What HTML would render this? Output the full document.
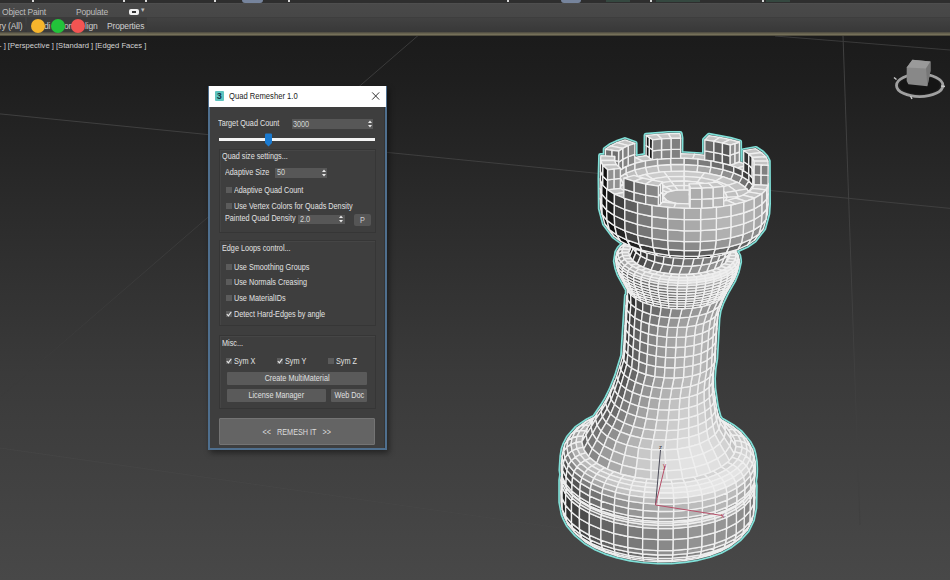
<!DOCTYPE html>
<html><head><meta charset="utf-8">
<style>
*{box-sizing:border-box;margin:0;padding:0}
html,body{width:950px;height:580px;overflow:hidden;background:#1b1b1b;font-family:"Liberation Sans",sans-serif}
#vp{position:absolute;left:0;top:36px;width:950px;height:544px;background:linear-gradient(#1b1b1b 0%,#1e1e1e 8%,#2b2b2b 32%,#3a3a3a 62%,#484848 100%)}
.a{position:absolute;white-space:nowrap}
#tb0{position:absolute;left:0;top:0;width:950px;height:3px;background:#2e2e2e}
#tb1{position:absolute;left:0;top:3px;width:950px;height:14px;background:linear-gradient(#505050 0px,#494949 1.5px,#474747 13px)}
#tb2{position:absolute;left:0;top:16.5px;width:950px;height:16px;background:linear-gradient(#3a3a3a 0px,#424242 1px,#3d3d3d 8px,#383838 15px)}
#tbl{position:absolute;left:0;top:31.5px;width:950px;height:4.5px;background:linear-gradient(#4a4840,#6c6752 45%,#7a755e 75%,#2a2822)}
.tt{color:#bdbdbd;font-size:8.5px;line-height:10px}
.dot{position:absolute;width:14px;height:14px;border-radius:50%}
#dlg{position:absolute;left:208px;top:86px;width:179px;height:364px;background:#3c3c3c;border:1px solid #5b7fa3}
#ttl{position:absolute;left:0;top:0;width:177px;height:21px;background:#fff}
.w{color:#e6e6e6;font-size:8px}
.grp{position:absolute;border:1px solid #333;background:#393939}
.spin{position:absolute;background:#575757;color:#d0d0d0;font-size:8px;padding-left:2px;line-height:10px}
.cb{position:absolute;width:6px;height:6px;background:#5a5a5a}
.btn{position:absolute;background:#5c5c5c;border:1px solid #666;color:#e0e0e0;font-size:8px;text-align:center}
</style></head><body>
<div id="tb0"></div>
<div id="tb1"></div>
<div class="a" style="left:32px;top:0;width:2px;height:2px;background:#d8d8d8"></div><div class="a" style="left:123px;top:0;width:2px;height:2px;background:#d8d8d8"></div><div class="a" style="left:145px;top:0;width:2px;height:2px;background:#d8d8d8"></div><div class="a" style="left:214px;top:0;width:2px;height:2px;background:#d8d8d8"></div><div class="a" style="left:288px;top:0;width:2px;height:2px;background:#d8d8d8"></div><div class="a" style="left:507px;top:0;width:2px;height:2px;background:#d8d8d8"></div><div class="a" style="left:650px;top:0;width:2px;height:2px;background:#d8d8d8"></div><div class="a" style="left:762px;top:0;width:2px;height:2px;background:#d8d8d8"></div><div class="a" style="left:242px;top:0;width:21px;height:3px;background:#76849c;border-radius:0 0 3px 3px"></div><div class="a" style="left:561px;top:0;width:20px;height:3px;background:#76849c;border-radius:0 0 3px 3px"></div><div class="a" style="left:606px;top:0;width:24px;height:2px;background:#354840"></div><div class="a" style="left:656px;top:0;width:44px;height:2px;background:#354840"></div><div class="a" style="left:766px;top:0;width:24px;height:2px;background:#354840"></div>
<div id="tb2"></div>
<div class="a" style="left:0;top:17px;width:25px;height:15px;background:#3a3a3a"></div>
<div class="a" style="left:27px;top:17px;width:120px;height:15px;background:#3b3b3b"></div>
<div id="tbl"></div>
<div class="a tt" style="left:2px;top:6.5px;font-size:8.5px;letter-spacing:-0.2px">Object Paint</div>
<div class="a tt" style="left:76px;top:6.5px;font-size:8.5px;letter-spacing:-0.2px">Populate</div>
<div class="a" style="left:129px;top:8.5px;width:10px;height:6px;background:#f0f0f0;border-radius:2px"></div>
<div class="a" style="left:132px;top:10.5px;width:4px;height:2px;background:#333"></div>
<div class="a tt" style="left:141px;top:5px;font-size:7px">&#9662;</div>
<div class="a tt" style="left:-1px;top:20.5px;font-size:8.5px;letter-spacing:-0.15px;color:#cfcfcf">ry (All)</div>
<div class="a tt" style="left:44px;top:20.5px;font-size:8.5px;letter-spacing:-0.15px;color:#cfcfcf">di</div>
<div class="a tt" style="left:64px;top:20.5px;font-size:8.5px;letter-spacing:-0.15px;color:#cfcfcf">on</div>
<div class="a tt" style="left:85px;top:20.5px;font-size:8.5px;letter-spacing:-0.15px;color:#cfcfcf">lign</div>
<div class="a tt" style="left:107px;top:20.5px;font-size:8.5px;letter-spacing:-0.15px;color:#cfcfcf">Properties</div>
<div class="dot" style="left:31px;top:19px;background:#f7b52c"></div>
<div class="dot" style="left:51px;top:19px;background:#22c33a"></div>
<div class="dot" style="left:71px;top:19px;background:#f35452"></div>
<div id="vp"></div>
<div class="a" style="left:-1px;top:40.5px;color:#d4d4d4;font-size:7.6px;line-height:9px;letter-spacing:0px">- ] [Perspective ] [Standard ] [Edged Faces ]</div>
<svg class="a" style="left:0;top:36px" width="950" height="544" viewBox="0 36 950 544">
<g fill="none" stroke-width="1">
<line x1="0" y1="113.9" x2="950" y2="208.4" stroke="#3f3f3f"/>
<line x1="0" y1="397" x2="421" y2="33" stroke="#3b3b3b"/>
<line x1="843" y1="36" x2="860" y2="525" stroke="#404040"/>
<line x1="775" y1="36" x2="950" y2="50" stroke="#3a3a3a"/>
<line x1="0" y1="448" x2="560" y2="528" stroke="#4a4a4a" stroke-opacity="0.5"/>
</g>
<ellipse cx="919.7" cy="85.4" rx="23.2" ry="11.2" fill="none" stroke="#a0a0a0" stroke-width="2.8"/>
<ellipse cx="919.7" cy="85.2" rx="20" ry="9" fill="#151515"/>
<path d="M906.7,67.6 L912.4,59.8 L930.5,61.4 L930.5,70.7 L927.4,86.2 L908.3,84.2 L906.7,81Z" fill="#888"/>
<path d="M906.7,67.6 L912.4,59.8 L930.5,61.4 L926,68.5Z" fill="#9a9a9a"/>
<path d="M926,68.5 L930.5,61.4 L930.5,70.7 L927.4,86.2Z" fill="#777"/>
<path d="M894,77.5 l2.5,2 M941,86 l4,0.5 M910.5,96 l1.5,3" stroke="#c8c8c8" stroke-width="1.5"/>
</svg>


<svg class="a" style="left:0;top:0" width="950" height="580" viewBox="0 0 950 580">
<path d="M587.6,420.3 576.6,427.7 568.1,437.3 564.6,444.1 562.9,449.0 561.7,456.1 560.8,470.1 561.5,474.4 560.6,480.1 560.6,502.1 562.9,514.3 564.5,518.3 568.0,525.2 575.8,534.4 585.8,542.7 594.9,548.0 605.5,552.6 617.4,556.4 630.3,559.3 643.8,561.2 657.7,562.1 671.5,562.0 685.0,560.9 697.9,558.8 709.8,555.7 720.4,551.8 729.5,547.0 739.5,539.4 747.4,530.6 752.6,520.0 755.0,507.9 755.4,485.9 754.7,481.5 755.6,475.9 755.8,468.9 755.5,461.8 754.3,454.7 753.0,449.7 749.5,442.8 741.2,432.7 733.5,426.6 721.1,419.3 719.3,416.6 716.6,406.6 714.0,388.5 713.6,378.5 714.3,368.5 715.9,358.4 718.1,318.4 719.3,310.8 722.0,302.9 726.7,293.1 733.9,280.6 737.4,271.9 739.7,261.9 739.6,259.8 738.9,255.7 735.9,250.7 747.5,245.5 754.6,240.6 763.9,228.5 768.0,213.6 768.6,203.5 768.4,161.1 766.1,156.6 761.9,152.3 755.8,148.3 743.4,150.5 743.3,163.0 739.8,161.8 739.7,141.7 730.2,139.1 708.9,135.2 704.4,139.8 704.4,154.8 681.0,153.3 681.1,138.1 680.3,133.4 668.3,133.3 645.9,135.2 645.7,155.2 635.2,157.0 635.2,143.2 624.9,139.5 616.8,142.3 610.2,145.5 605.1,149.1 605.0,155.5 600.5,155.4 599.9,178.5 600.2,208.6 604.3,223.8 613.6,236.4 620.7,241.7 623.9,243.3 618.9,248.2 616.6,252.1 615.2,261.2 616.6,268.3 618.7,274.3 627.1,289.7 627.2,295.7 626.8,295.2 626.3,295.4 622.5,355.5 616.4,375.4 610.9,389.3 606.7,397.9 602.2,405.4 594.4,416.8 587.6,420.3Z" fill="#80e0d8" stroke="#80e0d8" stroke-width="4.8" stroke-linejoin="round"/>
<path d="M587.6,420.3 576.6,427.7 568.1,437.3 564.6,444.1 562.9,449.0 561.7,456.1 560.8,470.1 561.5,474.4 560.6,480.1 560.6,502.1 562.9,514.3 564.5,518.3 568.0,525.2 575.8,534.4 585.8,542.7 594.9,548.0 605.5,552.6 617.4,556.4 630.3,559.3 643.8,561.2 657.7,562.1 671.5,562.0 685.0,560.9 697.9,558.8 709.8,555.7 720.4,551.8 729.5,547.0 739.5,539.4 747.4,530.6 752.6,520.0 755.0,507.9 755.4,485.9 754.7,481.5 755.6,475.9 755.8,468.9 755.5,461.8 754.3,454.7 753.0,449.7 749.5,442.8 741.2,432.7 733.5,426.6 721.1,419.3 719.3,416.6 716.6,406.6 714.0,388.5 713.6,378.5 714.3,368.5 715.9,358.4 718.1,318.4 719.3,310.8 722.0,302.9 726.7,293.1 733.9,280.6 737.4,271.9 739.7,261.9 739.6,259.8 738.9,255.7 735.9,250.7 747.5,245.5 754.6,240.6 763.9,228.5 768.0,213.6 768.6,203.5 768.4,161.1 766.1,156.6 761.9,152.3 755.8,148.3 743.4,150.5 743.3,163.0 739.8,161.8 739.7,141.7 730.2,139.1 708.9,135.2 704.4,139.8 704.4,154.8 681.0,153.3 681.1,138.1 680.3,133.4 668.3,133.3 645.9,135.2 645.7,155.2 635.2,157.0 635.2,143.2 624.9,139.5 616.8,142.3 610.2,145.5 605.1,149.1 605.0,155.5 600.5,155.4 599.9,178.5 600.2,208.6 604.3,223.8 613.6,236.4 620.7,241.7 623.9,243.3 618.9,248.2 616.6,252.1 615.2,261.2 616.6,268.3 618.7,274.3 627.1,289.7 627.2,295.7 626.8,295.2 626.3,295.4 622.5,355.5 616.4,375.4 610.9,389.3 606.7,397.9 602.2,405.4 594.4,416.8 587.6,420.3Z" fill="#3a4646" stroke="#3a4646" stroke-width="1.4" stroke-linejoin="round"/>
<g stroke="#efefef" stroke-width="1.35" stroke-linejoin="round">
<path d="M646.0,406.3 659.0,406.2 659.0,405.9 645.2,406.0Z" fill="#989898"/>
<path d="M659.0,406.2 671.9,407.1 672.7,406.8 659.0,405.9Z" fill="#9c9c9c"/>
<path d="M633.3,407.4 646.0,406.3 645.2,406.0 631.8,407.1Z" fill="#969696"/>
<path d="M671.9,407.1 684.6,408.9 686.2,408.7 672.7,406.8Z" fill="#a0a0a0"/>
<path d="M646.9,408.1 658.9,408.0 659.0,406.2 646.0,406.3Z" fill="#b3b3b3"/>
<path d="M658.9,408.0 671.0,408.9 671.9,407.1 659.0,406.2Z" fill="#b4b4b4"/>
<path d="M621.3,409.3 633.3,407.4 631.8,407.1 619.0,409.2Z" fill="#949494"/>
<path d="M684.6,408.9 696.6,411.6 698.9,411.6 686.2,408.7Z" fill="#a5a5a5"/>
<path d="M635.1,409.1 646.9,408.1 646.0,406.3 633.3,407.4Z" fill="#b2b2b2"/>
<path d="M671.0,408.9 682.7,410.5 684.6,408.9 671.9,407.1Z" fill="#b6b6b6"/>
<path d="M624.0,410.9 635.1,409.1 633.3,407.4 621.3,409.3Z" fill="#b1b1b1"/>
<path d="M682.7,410.5 693.9,413.0 696.6,411.6 684.6,408.9Z" fill="#b8b8b8"/>
<path d="M696.6,411.6 707.7,415.1 710.7,415.3 698.9,411.6Z" fill="#aaaaaa"/>
<path d="M610.2,412.2 621.3,409.3 619.0,409.2 607.2,412.2Z" fill="#949494"/>
<path d="M693.9,413.0 704.2,416.3 707.7,415.1 696.6,411.6Z" fill="#bbbbbb"/>
<path d="M613.7,413.6 624.0,410.9 621.3,409.3 610.2,412.2Z" fill="#b1b1b1"/>
<path d="M707.7,415.1 717.6,419.4 721.2,419.8 710.7,415.3Z" fill="#b0b0b0"/>
<path d="M600.3,415.8 610.2,412.2 607.2,412.2 596.7,416.1Z" fill="#949494"/>
<path d="M704.2,416.3 713.4,420.2 717.6,419.4 707.7,415.1Z" fill="#bdbdbd"/>
<path d="M604.5,416.9 613.7,413.6 610.2,412.2 600.3,415.8Z" fill="#b1b1b1"/>
<path d="M721.2,419.8 730.2,425.0 733.3,427.0 723.9,421.5Z" fill="#a4a4a4"/>
<path d="M587.8,420.7 596.7,416.1 593.8,417.6 584.5,422.5Z" fill="#6f6f6f"/>
<path d="M717.6,419.4 726.1,424.2 730.2,425.0 721.2,419.8Z" fill="#b6b6b6"/>
<path d="M591.8,420.2 600.3,415.8 596.7,416.1 587.8,420.7Z" fill="#959595"/>
<path d="M713.4,420.2 721.2,424.7 726.1,424.2 717.6,419.4Z" fill="#c0c0c0"/>
<path d="M596.6,421.0 604.5,416.9 600.3,415.8 591.8,420.2Z" fill="#b1b1b1"/>
<path d="M730.2,425.0 737.4,430.7 740.9,432.9 733.3,427.0Z" fill="#adadad"/>
<path d="M580.6,426.0 587.8,420.7 584.5,422.5 576.9,428.0Z" fill="#727272"/>
<path d="M726.1,424.2 732.9,429.6 737.4,430.7 730.2,425.0Z" fill="#bcbcbc"/>
<path d="M585.0,425.2 591.8,420.2 587.8,420.7 580.6,426.0Z" fill="#979797"/>
<path d="M721.2,424.7 727.5,429.7 732.9,429.6 726.1,424.2Z" fill="#c3c3c3"/>
<path d="M590.3,425.6 596.6,421.0 591.8,420.2 585.0,425.2Z" fill="#b2b2b2"/>
<path d="M737.4,430.7 742.7,436.8 746.4,439.3 740.9,432.9Z" fill="#b7b7b7"/>
<path d="M575.3,431.8 580.6,426.0 576.9,428.0 571.4,434.1Z" fill="#777777"/>
<path d="M748.9,466.9 752.4,473.8 753.3,475.8 749.8,468.8Z" fill="#929292"/>
<path d="M563.7,468.2 567.2,461.4 566.2,463.2 562.7,470.1Z" fill="#393939"/>
<path d="M732.9,429.6 737.9,435.4 742.7,436.8 737.4,430.7Z" fill="#c2c2c2"/>
<path d="M580.0,430.7 585.0,425.2 580.6,426.0 575.3,431.8Z" fill="#9a9a9a"/>
<path d="M727.5,429.7 732.2,435.1 737.9,435.4 732.9,429.6Z" fill="#c6c6c6"/>
<path d="M585.7,430.7 590.3,425.6 585.0,425.2 580.0,430.7Z" fill="#b4b4b4"/>
<path d="M746.4,439.3 749.7,446.0 752.6,449.9 749.1,443.0Z" fill="#b0b0b0"/>
<path d="M568.0,440.5 571.4,434.1 568.4,437.6 564.9,444.2Z" fill="#575757"/>
<path d="M742.7,436.8 745.9,443.2 749.7,446.0 746.4,439.3Z" fill="#c1c1c1"/>
<path d="M572.1,438.0 575.3,431.8 571.4,434.1 568.0,440.5Z" fill="#7d7d7d"/>
<path d="M587.6,427.8 592.3,421.2 588.6,427.3 583.6,434.3Z" fill="#484848"/>
<path d="M725.0,425.2 729.7,432.1 734.2,438.8 729.3,431.5Z" fill="#a3a3a3"/>
<path d="M737.9,435.4 740.9,441.4 745.9,443.2 742.7,436.8Z" fill="#c8c8c8"/>
<path d="M577.0,436.5 580.0,430.7 575.3,431.8 572.1,438.0Z" fill="#9e9e9e"/>
<path d="M753.3,475.8 754.5,482.9 755.0,485.9 753.8,478.7Z" fill="#858585"/>
<path d="M561.5,477.1 562.7,470.1 562.2,473.0 561.0,480.1Z" fill="#212121"/>
<path d="M752.4,473.8 753.6,480.9 754.5,482.9 753.3,475.8Z" fill="#9d9d9d"/>
<path d="M562.6,475.1 563.7,468.2 562.7,470.1 561.5,477.1Z" fill="#424242"/>
<path d="M732.2,435.1 735.0,440.7 740.9,441.4 737.9,435.4Z" fill="#c8c8c8"/>
<path d="M582.9,436.1 585.7,430.7 580.0,430.7 577.0,436.5Z" fill="#b5b5b5"/>
<path d="M592.6,420.5 596.9,414.4 592.3,421.2 587.6,427.8Z" fill="#4c4c4c"/>
<path d="M719.7,418.1 724.1,424.5 729.7,432.1 725.0,425.2Z" fill="#a6a6a6"/>
<path d="M752.6,449.9 753.8,456.9 755.1,461.9 753.9,454.8Z" fill="#a0a0a0"/>
<path d="M563.8,451.1 564.9,444.2 563.3,449.1 562.1,456.1Z" fill="#343434"/>
<path d="M754.9,496.9 753.7,504.0 753.4,515.0 754.6,507.9Z" fill="#747474"/>
<path d="M562.1,498.3 560.9,491.1 561.0,502.1 562.2,509.3Z" fill="#181818"/>
<path d="M749.7,446.0 750.9,452.8 753.8,456.9 752.6,449.9Z" fill="#bcbcbc"/>
<path d="M566.9,447.2 568.0,440.5 564.9,444.2 563.8,451.1Z" fill="#616161"/>
<path d="M745.9,443.2 747.0,449.6 750.9,452.8 749.7,446.0Z" fill="#cacaca"/>
<path d="M571.0,444.4 572.1,438.0 568.0,440.5 566.9,447.2Z" fill="#848484"/>
<path d="M755.0,485.9 753.8,493.0 753.7,504.0 754.9,496.9Z" fill="#767676"/>
<path d="M562.2,487.3 561.0,480.1 560.9,491.1 562.1,498.3Z" fill="#1a1a1a"/>
<path d="M740.9,441.4 742.0,447.5 747.0,449.6 745.9,443.2Z" fill="#cecece"/>
<path d="M576.0,442.5 577.0,436.5 572.1,438.0 571.0,444.4Z" fill="#a3a3a3"/>
<path d="M729.7,432.1 731.2,439.2 735.9,446.3 734.2,438.8Z" fill="#b4b4b4"/>
<path d="M586.0,434.8 587.6,427.8 583.6,434.3 581.9,441.7Z" fill="#545454"/>
<path d="M735.0,440.7 735.9,446.3 742.0,447.5 740.9,441.4Z" fill="#cbcbcb"/>
<path d="M581.9,441.7 582.9,436.1 577.0,436.5 576.0,442.5Z" fill="#b7b7b7"/>
<path d="M754.5,482.9 753.3,489.9 753.8,493.0 755.0,485.9Z" fill="#919191"/>
<path d="M562.7,484.2 561.5,477.1 561.0,480.1 562.2,487.3Z" fill="#2d2d2d"/>
<path d="M753.6,480.9 752.4,487.8 753.3,489.9 754.5,482.9Z" fill="#a8a8a8"/>
<path d="M563.7,482.2 562.6,475.1 561.5,477.1 562.7,484.2Z" fill="#4d4d4d"/>
<path d="M724.1,424.5 725.5,431.0 731.2,439.2 729.7,432.1Z" fill="#b6b6b6"/>
<path d="M591.1,427.0 592.6,420.5 587.6,427.8 586.0,434.8Z" fill="#585858"/>
<path d="M752.2,519.9 748.7,526.6 747.1,530.4 750.6,523.7Z" fill="#6e6e6e"/>
<path d="M566.8,521.2 563.3,514.2 564.9,518.1 568.3,525.0Z" fill="#0f0f0f"/>
<path d="M755.4,468.9 754.2,476.0 754.0,483.0 755.2,475.9Z" fill="#909090"/>
<path d="M562.6,470.2 561.4,463.1 561.2,470.1 562.4,477.2Z" fill="#202020"/>
<path d="M718.9,416.8 720.3,422.9 725.5,431.0 724.1,424.5Z" fill="#b3b3b3"/>
<path d="M595.7,419.1 597.1,413.2 592.6,420.5 591.1,427.0Z" fill="#535353"/>
<path d="M753.4,515.0 749.9,521.8 748.7,526.6 752.2,519.9Z" fill="#808080"/>
<path d="M565.7,516.3 562.2,509.3 563.3,514.2 566.8,521.2Z" fill="#161616"/>
<path d="M755.1,461.9 753.9,468.9 754.2,476.0 755.4,468.9Z" fill="#979797"/>
<path d="M563.3,463.2 562.1,456.1 561.4,463.1 562.6,470.2Z" fill="#282828"/>
<path d="M716.5,409.1 717.8,414.7 720.3,422.9 718.9,416.8Z" fill="#adadad"/>
<path d="M601.2,411.3 602.5,405.7 597.1,413.2 595.7,419.1Z" fill="#484848"/>
<path d="M753.8,456.9 752.6,463.8 753.9,468.9 755.1,461.9Z" fill="#adadad"/>
<path d="M564.9,458.1 563.8,451.1 562.1,456.1 563.3,463.2Z" fill="#414141"/>
<path d="M753.7,504.0 750.1,510.9 749.9,521.8 753.4,515.0Z" fill="#7e7e7e"/>
<path d="M565.6,505.3 562.1,498.3 562.2,509.3 565.7,516.3Z" fill="#242424"/>
<path d="M750.9,452.8 749.7,459.5 752.6,463.8 753.8,456.9Z" fill="#c7c7c7"/>
<path d="M568.0,454.0 566.9,447.2 563.8,451.1 564.9,458.1Z" fill="#6b6b6b"/>
<path d="M747.0,449.6 745.9,456.0 749.7,459.5 750.9,452.8Z" fill="#d2d2d2"/>
<path d="M572.1,450.8 571.0,444.4 566.9,447.2 568.0,454.0Z" fill="#8c8c8c"/>
<path d="M742.0,447.5 740.9,453.5 745.9,456.0 747.0,449.6Z" fill="#d3d3d3"/>
<path d="M577.0,448.6 576.0,442.5 571.0,444.4 572.1,450.8Z" fill="#a8a8a8"/>
<path d="M735.9,446.3 735.0,451.9 740.9,453.5 742.0,447.5Z" fill="#cdcdcd"/>
<path d="M582.9,447.3 581.9,441.7 576.0,442.5 577.0,448.6Z" fill="#bababa"/>
<path d="M715.0,401.3 716.2,406.7 717.8,414.7 716.5,409.1Z" fill="#a5a5a5"/>
<path d="M605.8,403.3 607.1,398.1 602.5,405.7 601.2,411.3Z" fill="#3c3c3c"/>
<path d="M753.8,493.0 750.2,499.8 750.1,510.9 753.7,504.0Z" fill="#7f7f7f"/>
<path d="M565.7,494.3 562.2,487.3 562.1,498.3 565.6,505.3Z" fill="#262626"/>
<path d="M731.2,439.2 729.7,446.2 734.2,453.7 735.9,446.3Z" fill="#c3c3c3"/>
<path d="M587.6,441.9 586.0,434.8 581.9,441.7 583.6,449.2Z" fill="#636363"/>
<path d="M713.8,392.5 714.9,397.6 716.2,406.7 715.0,401.3Z" fill="#9f9f9f"/>
<path d="M610.1,394.4 611.2,389.4 607.1,398.1 605.8,403.3Z" fill="#343434"/>
<path d="M753.3,489.9 749.8,496.8 750.2,499.8 753.8,493.0Z" fill="#9b9b9b"/>
<path d="M566.2,491.2 562.7,484.2 562.2,487.3 565.7,494.3Z" fill="#3a3a3a"/>
<path d="M752.4,487.8 748.9,494.6 749.8,496.8 753.3,489.9Z" fill="#b2b2b2"/>
<path d="M567.2,489.1 563.7,482.2 562.7,484.2 566.2,491.2Z" fill="#595959"/>
<path d="M725.5,431.0 724.1,437.5 729.7,446.2 731.2,439.2Z" fill="#c5c5c5"/>
<path d="M592.6,433.5 591.1,427.0 586.0,434.8 587.6,441.9Z" fill="#676767"/>
<path d="M671.7,233.6 678.9,233.6 678.9,230.7 670.7,230.7Z" fill="#c4c4c4"/>
<path d="M678.9,233.6 686.0,234.0 687.0,231.2 678.9,230.7Z" fill="#c4c4c4"/>
<path d="M754.0,483.0 750.5,489.8 749.9,492.7 753.4,485.9Z" fill="#888888"/>
<path d="M566.0,484.3 562.4,477.2 562.8,480.2 566.3,487.2Z" fill="#1d1d1d"/>
<path d="M712.5,383.7 713.6,388.5 714.9,397.6 713.8,392.5Z" fill="#9b9b9b"/>
<path d="M613.6,385.5 614.7,380.8 611.2,389.4 610.1,394.4Z" fill="#2f2f2f"/>
<path d="M748.7,526.6 742.9,533.0 741.5,536.6 747.1,530.4Z" fill="#777777"/>
<path d="M572.6,527.9 566.8,521.2 568.3,525.0 574.0,531.6Z" fill="#161616"/>
<path d="M686.0,234.0 692.9,234.8 694.9,232.1 687.0,231.2Z" fill="#c4c4c4"/>
<path d="M664.8,234.0 671.7,233.6 670.7,230.7 662.8,231.2Z" fill="#c4c4c4"/>
<path d="M720.3,422.9 718.9,428.8 724.1,437.5 725.5,431.0Z" fill="#c3c3c3"/>
<path d="M597.1,425.2 595.7,419.1 591.1,427.0 592.6,433.5Z" fill="#626262"/>
<path d="M680.6,158.2 692.8,158.7 694.5,154.2 679.9,153.6Z" fill="#c4c4c4"/>
<path d="M754.2,476.0 750.7,482.8 750.5,489.8 754.0,483.0Z" fill="#9b9b9b"/>
<path d="M566.2,477.3 562.6,470.2 562.4,477.2 566.0,484.3Z" fill="#2e2e2e"/>
<path d="M749.9,521.8 744.0,528.3 742.9,533.0 748.7,526.6Z" fill="#8a8a8a"/>
<path d="M571.5,523.1 565.7,516.3 566.8,521.2 572.6,527.9Z" fill="#252525"/>
<path d="M692.9,234.8 699.6,236.1 702.5,233.5 694.9,232.1Z" fill="#c4c4c4"/>
<path d="M658.1,234.8 664.8,234.0 662.8,231.2 655.2,232.1Z" fill="#c4c4c4"/>
<path d="M692.8,158.7 704.7,159.9 708.8,155.6 694.5,154.2Z" fill="#c4c4c4"/>
<path d="M717.8,414.7 716.5,420.3 718.9,428.8 720.3,422.9Z" fill="#bdbdbd"/>
<path d="M602.5,416.9 601.2,411.3 595.7,419.1 597.1,425.2Z" fill="#585858"/>
<path d="M753.9,468.9 750.4,475.7 750.7,482.8 754.2,476.0Z" fill="#a3a3a3"/>
<path d="M566.8,470.2 563.3,463.2 562.6,470.2 566.2,477.3Z" fill="#363636"/>
<path d="M716.2,406.7 715.0,411.9 716.5,420.3 717.8,414.7Z" fill="#b5b5b5"/>
<path d="M607.1,408.7 605.8,403.3 601.2,411.3 602.5,416.9Z" fill="#4c4c4c"/>
<path d="M750.1,510.9 744.3,517.3 744.0,528.3 749.9,521.8Z" fill="#868686"/>
<path d="M571.5,512.1 565.6,505.3 565.7,516.3 571.5,523.1Z" fill="#313131"/>
<path d="M752.6,463.8 749.1,470.4 750.4,475.7 753.9,468.9Z" fill="#b8b8b8"/>
<path d="M568.4,465.0 564.9,458.1 563.3,463.2 566.8,470.2Z" fill="#4f4f4f"/>
<path d="M699.6,236.1 705.9,237.6 709.7,235.3 702.5,233.5Z" fill="#c4c4c4"/>
<path d="M651.8,236.0 658.1,234.8 655.2,232.1 648.0,233.5Z" fill="#c4c4c4"/>
<path d="M735.0,451.9 732.2,457.3 737.9,459.3 740.9,453.5Z" fill="#cfcfcf"/>
<path d="M585.7,452.9 582.9,447.3 577.0,448.6 580.0,454.6Z" fill="#bcbcbc"/>
<path d="M749.7,459.5 746.4,465.9 749.1,470.4 752.6,463.8Z" fill="#d0d0d0"/>
<path d="M571.4,460.7 568.0,454.0 564.9,458.1 568.4,465.0Z" fill="#777777"/>
<path d="M740.9,453.5 737.9,459.3 742.7,462.2 745.9,456.0Z" fill="#d8d8d8"/>
<path d="M580.0,454.6 577.0,448.6 572.1,450.8 575.3,457.2Z" fill="#adadad"/>
<path d="M745.9,456.0 742.7,462.2 746.4,465.9 749.7,459.5Z" fill="#d9d9d9"/>
<path d="M575.3,457.2 572.1,450.8 568.0,454.0 571.4,460.7Z" fill="#959595"/>
<path d="M684.2,164.5 697.9,165.3 697.1,172.0 684.2,171.2Z" fill="#b1b1b1"/>
<path d="M670.6,164.5 684.2,164.5 684.2,171.2 671.3,171.3Z" fill="#b9b9b9"/>
<path d="M670.6,158.3 684.3,158.2 684.2,164.5 670.6,164.5Z" fill="#919191"/>
<path d="M684.3,158.2 697.9,159.1 697.9,165.3 684.2,164.5Z" fill="#878787"/>
<path d="M649.4,147.7 646.2,145.5 646.1,155.5 649.3,157.7Z" fill="#131313"/>
<path d="M714.9,397.6 713.8,402.6 715.0,411.9 716.2,406.7Z" fill="#afafaf"/>
<path d="M611.2,399.5 610.1,394.4 605.8,403.3 607.1,408.7Z" fill="#444444"/>
<path d="M671.0,138.3 680.7,138.2 680.0,133.6 668.3,133.7Z" fill="#c4c4c4"/>
<path d="M750.2,499.8 744.4,506.3 744.3,517.3 750.1,510.9Z" fill="#878787"/>
<path d="M571.5,501.1 565.7,494.3 565.6,505.3 571.5,512.1Z" fill="#323232"/>
<path d="M697.9,165.3 711.0,167.1 709.5,173.7 697.1,172.0Z" fill="#a7a7a7"/>
<path d="M657.5,165.5 670.6,164.5 671.3,171.3 659.0,172.2Z" fill="#bebebe"/>
<path d="M697.9,159.1 711.1,160.8 711.0,167.1 697.9,165.3Z" fill="#7b7b7b"/>
<path d="M657.5,159.2 670.6,158.3 670.6,164.5 657.5,165.5Z" fill="#979797"/>
<path d="M671.0,149.3 680.6,149.2 680.6,158.2 670.9,158.3Z" fill="#808080"/>
<path d="M705.9,237.6 711.6,239.6 716.2,237.5 709.7,235.3Z" fill="#c4c4c4"/>
<path d="M646.1,237.6 651.8,236.0 648.0,233.5 641.5,235.3Z" fill="#c4c4c4"/>
<path d="M661.6,138.8 671.0,138.3 668.3,133.7 657.0,134.4Z" fill="#c4c4c4"/>
<path d="M713.6,388.5 712.5,393.2 713.8,402.6 714.9,397.6Z" fill="#acacac"/>
<path d="M614.7,390.3 613.6,385.5 610.1,394.4 611.2,399.5Z" fill="#404040"/>
<path d="M649.4,137.7 646.2,135.5 646.2,145.5 649.4,147.7Z" fill="#131313"/>
<path d="M741.5,536.6 733.8,542.3 731.8,544.6 739.3,539.1Z" fill="#555555"/>
<path d="M581.7,537.8 574.0,531.6 576.1,534.2 583.6,540.2Z" fill="#0f0f0f"/>
<path d="M749.8,496.8 744.0,503.2 744.4,506.3 750.2,499.8Z" fill="#a4a4a4"/>
<path d="M572.0,498.0 566.2,491.2 565.7,494.3 571.5,501.1Z" fill="#484848"/>
<path d="M592.3,448.8 587.6,441.9 583.6,449.2 588.6,456.5Z" fill="#747474"/>
<path d="M729.7,446.2 725.0,452.8 729.3,460.7 734.2,453.7Z" fill="#d0d0d0"/>
<path d="M661.5,149.8 671.0,149.3 670.9,158.3 661.5,158.8Z" fill="#858585"/>
<path d="M748.9,494.6 743.1,500.9 744.0,503.2 749.8,496.8Z" fill="#bababa"/>
<path d="M573.0,495.8 567.2,489.1 566.2,491.2 572.0,498.0Z" fill="#656565"/>
<path d="M643.1,161.4 652.5,159.8 646.1,155.5 634.9,157.4Z" fill="#c4c4c4"/>
<path d="M724.1,437.5 719.7,443.6 725.0,452.8 729.7,446.2Z" fill="#d2d2d2"/>
<path d="M596.9,439.9 592.6,433.5 587.6,441.9 592.3,448.8Z" fill="#787878"/>
<path d="M749.9,492.7 744.1,499.1 743.1,500.9 748.9,494.6Z" fill="#616161"/>
<path d="M572.1,494.0 566.3,487.2 567.2,489.1 573.0,495.8Z" fill="#0d0d0d"/>
<path d="M704.8,139.9 713.9,141.3 719.9,137.3 708.9,135.6Z" fill="#c4c4c4"/>
<path d="M671.0,138.3 680.7,138.2 680.6,149.2 671.0,149.3Z" fill="#808080"/>
<path d="M742.9,533.0 735.1,538.8 733.8,542.3 741.5,536.6Z" fill="#7e7e7e"/>
<path d="M580.4,534.2 572.6,527.9 574.0,531.6 581.7,537.8Z" fill="#252525"/>
<path d="M652.6,139.8 661.6,138.8 657.0,134.4 646.2,135.5Z" fill="#c4c4c4"/>
<path d="M713.2,378.4 712.1,383.0 712.5,393.2 713.6,388.5Z" fill="#a4a4a4"/>
<path d="M617.9,380.2 616.8,375.6 613.6,385.5 614.7,390.3Z" fill="#363636"/>
<path d="M718.9,428.8 714.9,434.5 719.7,443.6 724.1,437.5Z" fill="#cfcfcf"/>
<path d="M601.1,431.1 597.1,425.2 592.6,433.5 596.9,439.9Z" fill="#737373"/>
<path d="M652.5,149.8 649.4,147.7 649.3,157.7 652.5,159.8Z" fill="#131313"/>
<path d="M750.5,489.8 744.6,496.3 744.1,499.1 749.9,492.7Z" fill="#929292"/>
<path d="M571.8,491.1 566.0,484.3 566.3,487.2 572.1,494.0Z" fill="#2c2c2c"/>
<path d="M704.8,150.9 713.9,152.3 713.9,161.3 704.7,159.9Z" fill="#696969"/>
<path d="M663.8,171.7 684.2,171.2 684.2,176.3 667.5,176.7Z" fill="#cccccc"/>
<path d="M684.2,171.2 704.6,172.9 700.9,177.7 684.2,176.3Z" fill="#cacaca"/>
<path d="M711.0,167.1 723.1,169.6 720.9,176.2 709.5,173.7Z" fill="#9b9b9b"/>
<path d="M645.4,167.3 657.5,165.5 659.0,172.2 647.5,174.0Z" fill="#c1c1c1"/>
<path d="M711.6,239.6 716.6,241.8 721.9,240.0 716.2,237.5Z" fill="#c4c4c4"/>
<path d="M641.1,239.5 646.1,237.6 641.5,235.3 635.8,237.5Z" fill="#c4c4c4"/>
<path d="M652.5,150.8 661.5,149.8 661.5,158.8 652.5,159.8Z" fill="#878787"/>
<path d="M711.1,160.8 723.2,163.3 723.1,169.6 711.0,167.1Z" fill="#6d6d6d"/>
<path d="M645.4,160.9 657.5,159.2 657.5,165.5 645.4,167.3Z" fill="#9a9a9a"/>
<path d="M661.6,138.8 671.0,138.3 671.0,149.3 661.5,149.8Z" fill="#858585"/>
<path d="M716.5,420.3 712.8,425.6 714.9,434.5 718.9,428.8Z" fill="#cacaca"/>
<path d="M606.3,422.4 602.5,416.9 597.1,425.2 601.1,431.1Z" fill="#696969"/>
<path d="M750.7,482.8 744.8,489.2 744.6,496.3 750.5,489.8Z" fill="#a5a5a5"/>
<path d="M572.0,484.0 566.2,477.3 566.0,484.3 571.8,491.1Z" fill="#3d3d3d"/>
<path d="M744.0,528.3 736.1,534.1 735.1,538.8 742.9,533.0Z" fill="#919191"/>
<path d="M579.5,529.4 571.5,523.1 572.6,527.9 580.4,534.2Z" fill="#343434"/>
<path d="M715.0,411.9 711.5,416.9 712.8,425.6 716.5,420.3Z" fill="#c3c3c3"/>
<path d="M610.6,413.9 607.1,408.7 602.5,416.9 606.3,422.4Z" fill="#5f5f5f"/>
<path d="M713.9,368.4 712.9,372.8 712.1,383.0 713.2,378.4Z" fill="#9e9e9e"/>
<path d="M620.9,370.1 619.9,365.6 616.8,375.6 617.9,380.2Z" fill="#2f2f2f"/>
<path d="M652.6,139.8 649.4,137.7 649.4,147.7 652.5,149.8Z" fill="#131313"/>
<path d="M713.9,141.3 722.5,143.1 730.1,139.5 719.9,137.3Z" fill="#c4c4c4"/>
<path d="M704.8,139.9 713.9,141.3 713.9,152.3 704.8,150.9Z" fill="#696969"/>
<path d="M732.2,457.3 727.5,462.4 732.9,464.8 737.9,459.3Z" fill="#d1d1d1"/>
<path d="M590.3,458.3 585.7,452.9 580.0,454.6 585.0,460.4Z" fill="#bfbfbf"/>
<path d="M750.4,475.7 744.6,482.1 744.8,489.2 750.7,482.8Z" fill="#adadad"/>
<path d="M572.6,476.9 566.8,470.2 566.2,477.3 572.0,484.0Z" fill="#454545"/>
<path d="M713.9,152.3 722.4,154.1 722.4,163.1 713.9,161.3Z" fill="#606060"/>
<path d="M652.6,139.8 661.6,138.8 661.5,149.8 652.5,150.8Z" fill="#878787"/>
<path d="M734.8,153.6 739.4,152.0 739.4,162.0 734.8,163.6Z" fill="#8f8f8f"/>
<path d="M744.3,517.3 736.4,523.2 736.1,534.1 744.0,528.3Z" fill="#8c8c8c"/>
<path d="M579.4,518.5 571.5,512.1 571.5,523.1 579.5,529.4Z" fill="#3e3e3e"/>
<path d="M713.8,402.6 710.4,407.3 711.5,416.9 715.0,411.9Z" fill="#bebebe"/>
<path d="M614.6,404.4 611.2,399.5 607.1,408.7 610.6,413.9Z" fill="#575757"/>
<path d="M634.8,163.4 643.1,161.4 634.9,157.4 624.9,159.9Z" fill="#c4c4c4"/>
<path d="M737.9,459.3 732.9,464.8 737.4,468.0 742.7,462.2Z" fill="#dbdbdb"/>
<path d="M585.0,460.4 580.0,454.6 575.3,457.2 580.6,463.3Z" fill="#b3b3b3"/>
<path d="M749.1,470.4 743.4,476.7 744.6,482.1 750.4,475.7Z" fill="#c1c1c1"/>
<path d="M574.1,471.6 568.4,465.0 566.8,470.2 572.6,476.9Z" fill="#5e5e5e"/>
<path d="M731.8,544.6 722.5,549.5 720.2,551.4 729.3,546.7Z" fill="#464646"/>
<path d="M592.9,545.6 583.6,540.2 586.1,542.4 595.1,547.6Z" fill="#0f0f0f"/>
<path d="M704.6,172.9 723.0,176.7 716.0,180.8 700.9,177.7Z" fill="#c8c8c8"/>
<path d="M645.4,174.4 663.8,171.7 667.5,176.7 652.5,178.9Z" fill="#cccccc"/>
<path d="M742.7,462.2 737.4,468.0 740.9,472.0 746.4,465.9Z" fill="#dfdfdf"/>
<path d="M580.6,463.3 575.3,457.2 571.4,460.7 576.9,467.1Z" fill="#9f9f9f"/>
<path d="M746.4,465.9 740.9,472.0 743.4,476.7 749.1,470.4Z" fill="#d8d8d8"/>
<path d="M576.9,467.1 571.4,460.7 568.4,465.0 574.1,471.6Z" fill="#848484"/>
<path d="M715.5,358.4 714.5,362.7 712.9,372.8 713.9,368.4Z" fill="#999999"/>
<path d="M623.9,360.0 622.9,355.6 619.9,365.6 620.9,370.1Z" fill="#2a2a2a"/>
<path d="M716.6,241.8 720.9,244.2 726.8,242.9 721.9,240.0Z" fill="#c4c4c4"/>
<path d="M636.8,241.7 641.1,239.5 635.8,237.5 630.9,240.0Z" fill="#c4c4c4"/>
<path d="M712.5,393.2 709.3,397.7 710.4,407.3 713.8,402.6Z" fill="#bababa"/>
<path d="M617.9,395.0 614.7,390.3 611.2,399.5 614.6,404.4Z" fill="#535353"/>
<path d="M713.9,141.3 722.5,143.1 722.4,154.1 713.9,152.3Z" fill="#606060"/>
<path d="M725.0,241.7 729.6,245.0 731.5,246.4 726.5,243.0Z" fill="#b1b1b1"/>
<path d="M628.1,241.9 632.7,238.9 629.5,240.1 624.5,243.2Z" fill="#7a7a7a"/>
<path d="M723.1,169.6 733.7,172.8 730.9,179.3 720.9,176.2Z" fill="#8e8e8e"/>
<path d="M634.7,169.9 645.4,167.3 647.5,174.0 637.5,176.5Z" fill="#c1c1c1"/>
<path d="M734.9,143.6 739.5,142.0 739.4,152.0 734.8,153.6Z" fill="#8f8f8f"/>
<path d="M723.2,163.3 733.8,166.4 733.7,172.8 723.1,169.6Z" fill="#5e5e5e"/>
<path d="M634.8,163.4 645.4,160.9 645.4,167.3 634.7,169.9Z" fill="#9a9a9a"/>
<path d="M744.4,506.3 736.4,512.1 736.4,523.2 744.3,517.3Z" fill="#8e8e8e"/>
<path d="M579.5,507.4 571.5,501.1 571.5,512.1 579.4,518.5Z" fill="#3f3f3f"/>
<path d="M733.8,542.3 724.2,547.3 722.5,549.5 731.8,544.6Z" fill="#595959"/>
<path d="M591.2,543.3 581.7,537.8 583.6,540.2 592.9,545.6Z" fill="#151515"/>
<path d="M722.5,143.1 730.3,145.2 739.5,142.0 730.1,139.5Z" fill="#c4c4c4"/>
<path d="M722.4,154.1 730.2,156.2 730.2,165.2 722.4,163.1Z" fill="#565656"/>
<path d="M730.2,165.2 737.5,167.8 748.1,165.2 739.4,162.0Z" fill="#c4c4c4"/>
<path d="M715.8,348.4 714.8,352.7 714.5,362.7 715.5,358.4Z" fill="#959595"/>
<path d="M624.8,350.0 623.8,345.6 622.9,355.6 623.9,360.0Z" fill="#252525"/>
<path d="M712.1,383.0 709.0,387.3 709.3,397.7 712.5,393.2Z" fill="#b3b3b3"/>
<path d="M621.0,384.7 617.9,380.2 614.7,390.3 617.9,395.0Z" fill="#494949"/>
<path d="M730.2,155.2 734.8,153.6 734.8,163.6 730.2,165.2Z" fill="#8f8f8f"/>
<path d="M744.0,503.2 736.1,509.0 736.4,512.1 744.4,506.3Z" fill="#ababab"/>
<path d="M579.9,504.3 572.0,498.0 571.5,501.1 579.5,507.4Z" fill="#565656"/>
<path d="M667.5,176.7 684.2,176.3 684.2,181.0 670.9,181.4Z" fill="#cccccc"/>
<path d="M684.2,176.3 700.9,177.7 697.5,182.2 684.2,181.0Z" fill="#cacaca"/>
<path d="M743.1,500.9 735.3,506.7 736.1,509.0 744.0,503.2Z" fill="#c0c0c0"/>
<path d="M580.8,502.0 573.0,495.8 572.0,498.0 579.9,504.3Z" fill="#727272"/>
<path d="M735.1,538.8 725.3,543.9 724.2,547.3 733.8,542.3Z" fill="#838383"/>
<path d="M590.2,539.8 580.4,534.2 581.7,537.8 591.2,543.3Z" fill="#343434"/>
<path d="M725.0,452.8 717.4,458.7 721.2,467.0 729.3,460.7Z" fill="#dadada"/>
<path d="M599.9,455.1 592.3,448.8 588.6,456.5 596.6,463.3Z" fill="#868686"/>
<path d="M604.0,445.8 596.9,439.9 592.3,448.8 599.9,455.1Z" fill="#898989"/>
<path d="M719.7,443.6 712.7,449.0 717.4,458.7 725.0,452.8Z" fill="#dbdbdb"/>
<path d="M744.1,499.1 736.2,505.0 735.3,506.7 743.1,500.9Z" fill="#676767"/>
<path d="M580.0,500.3 572.1,494.0 573.0,495.8 580.8,502.0Z" fill="#1a1a1a"/>
<path d="M714.9,434.5 708.4,439.5 712.7,449.0 719.7,443.6Z" fill="#d9d9d9"/>
<path d="M607.6,436.5 601.1,431.1 596.9,439.9 604.0,445.8Z" fill="#858585"/>
<path d="M612.4,427.5 606.3,422.4 601.1,431.1 607.6,436.5Z" fill="#7c7c7c"/>
<path d="M712.8,425.6 706.7,430.3 708.4,439.5 714.9,434.5Z" fill="#d4d4d4"/>
<path d="M712.9,372.8 709.8,377.0 709.0,387.3 712.1,383.0Z" fill="#adadad"/>
<path d="M624.0,374.4 620.9,370.1 617.9,380.2 621.0,384.7Z" fill="#434343"/>
<path d="M722.5,143.1 730.3,145.2 730.2,156.2 722.4,154.1Z" fill="#565656"/>
<path d="M720.9,244.2 724.3,246.9 730.7,245.9 726.8,242.9Z" fill="#c4c4c4"/>
<path d="M633.4,244.2 636.8,241.7 630.9,240.0 627.0,242.8Z" fill="#c4c4c4"/>
<path d="M716.4,338.4 715.4,342.6 714.8,352.7 715.8,348.4Z" fill="#929292"/>
<path d="M625.4,339.9 624.4,335.6 623.8,345.6 624.8,350.0Z" fill="#222222"/>
<path d="M730.3,145.2 734.9,143.6 734.8,153.6 730.2,155.2Z" fill="#8f8f8f"/>
<path d="M744.6,496.3 736.7,502.1 736.2,505.0 744.1,499.1Z" fill="#9a9a9a"/>
<path d="M579.7,497.4 571.8,491.1 572.1,494.0 580.0,500.3Z" fill="#3b3b3b"/>
<path d="M711.5,416.9 705.7,421.3 706.7,430.3 712.8,425.6Z" fill="#cecece"/>
<path d="M616.4,418.7 610.6,413.9 606.3,422.4 612.4,427.5Z" fill="#727272"/>
<path d="M736.1,534.1 726.2,539.3 725.3,543.9 735.1,538.8Z" fill="#979797"/>
<path d="M589.3,535.2 579.5,529.4 580.4,534.2 590.2,539.8Z" fill="#434343"/>
<path d="M727.5,462.4 721.2,467.0 726.1,469.8 732.9,464.8Z" fill="#d2d2d2"/>
<path d="M596.6,463.3 590.3,458.3 585.0,460.4 591.8,465.8Z" fill="#c1c1c1"/>
<path d="M710.4,407.3 704.9,411.5 705.7,421.3 711.5,416.9Z" fill="#c8c8c8"/>
<path d="M620.1,408.9 614.6,404.4 610.6,413.9 616.4,418.7Z" fill="#6b6b6b"/>
<path d="M744.8,489.2 736.9,495.1 736.7,502.1 744.6,496.3Z" fill="#adadad"/>
<path d="M579.9,490.4 572.0,484.0 571.8,491.1 579.7,497.4Z" fill="#4d4d4d"/>
<path d="M626.9,364.3 623.9,360.0 620.9,370.1 624.0,374.4Z" fill="#3d3d3d"/>
<path d="M714.5,362.7 711.5,366.8 709.8,377.0 712.9,372.8Z" fill="#a8a8a8"/>
<path d="M729.6,245.0 733.1,248.4 735.1,250.1 731.5,246.4Z" fill="#bababa"/>
<path d="M624.6,245.2 628.1,241.9 624.5,243.2 620.9,246.7Z" fill="#7f7f7f"/>
<path d="M652.5,178.9 667.5,176.7 670.9,181.4 658.9,183.1Z" fill="#cdcdcd"/>
<path d="M700.9,177.7 716.0,180.8 709.5,184.7 697.5,182.2Z" fill="#c8c8c8"/>
<path d="M722.5,549.5 711.5,553.5 709.7,555.3 720.2,551.4Z" fill="#494949"/>
<path d="M603.9,550.3 592.9,545.6 595.1,547.6 605.6,552.2Z" fill="#141414"/>
<path d="M717.0,328.4 716.0,332.6 715.4,342.6 716.4,338.4Z" fill="#929292"/>
<path d="M626.0,329.9 625.0,325.6 624.4,335.6 625.4,339.9Z" fill="#222222"/>
<path d="M709.3,397.7 704.1,401.7 704.9,411.5 710.4,407.3Z" fill="#c5c5c5"/>
<path d="M623.2,399.3 617.9,395.0 614.6,404.4 620.1,408.9Z" fill="#676767"/>
<path d="M723.0,176.7 737.6,182.2 727.9,185.3 716.0,180.8Z" fill="#c5c5c5"/>
<path d="M630.8,179.0 645.4,174.4 652.5,178.9 640.5,182.7Z" fill="#cccccc"/>
<path d="M736.4,523.2 726.5,528.3 726.2,539.3 736.1,534.1Z" fill="#919191"/>
<path d="M589.3,524.2 579.4,518.5 579.5,529.4 589.3,535.2Z" fill="#4b4b4b"/>
<path d="M733.7,172.8 742.4,176.7 739.1,183.0 730.9,179.3Z" fill="#808080"/>
<path d="M626.0,173.2 634.7,169.9 637.5,176.5 629.3,179.7Z" fill="#bebebe"/>
<path d="M732.9,464.8 726.1,469.8 730.2,473.3 737.4,468.0Z" fill="#dfdfdf"/>
<path d="M591.8,465.8 585.0,460.4 580.6,463.3 587.8,469.0Z" fill="#b9b9b9"/>
<path d="M744.6,482.1 736.7,487.9 736.9,495.1 744.8,489.2Z" fill="#b4b4b4"/>
<path d="M580.5,483.2 572.6,476.9 572.0,484.0 579.9,490.4Z" fill="#555555"/>
<path d="M737.5,167.8 743.6,170.7 755.5,168.7 748.1,165.2Z" fill="#c4c4c4"/>
<path d="M733.8,166.4 742.5,170.1 742.4,176.7 733.7,172.8Z" fill="#4d4d4d"/>
<path d="M626.1,166.6 634.8,163.4 634.7,169.9 626.0,173.2Z" fill="#979797"/>
<path d="M737.4,468.0 730.2,473.3 733.3,477.5 740.9,472.0Z" fill="#e4e4e4"/>
<path d="M587.8,469.0 580.6,463.3 576.9,467.1 584.5,473.0Z" fill="#a9a9a9"/>
<path d="M743.4,476.7 735.6,482.4 736.7,487.9 744.6,482.1Z" fill="#c9c9c9"/>
<path d="M581.9,477.8 574.1,471.6 572.6,476.9 580.5,483.2Z" fill="#6d6d6d"/>
<path d="M709.0,387.3 704.0,391.1 704.1,401.7 709.3,397.7Z" fill="#bebebe"/>
<path d="M626.0,388.8 621.0,384.7 617.9,395.0 623.2,399.3Z" fill="#5e5e5e"/>
<path d="M627.8,354.2 624.8,350.0 623.9,360.0 626.9,364.3Z" fill="#393939"/>
<path d="M714.8,352.7 711.8,356.7 711.5,366.8 714.5,362.7Z" fill="#a4a4a4"/>
<path d="M724.2,547.3 713.0,551.5 711.5,553.5 722.5,549.5Z" fill="#5c5c5c"/>
<path d="M602.5,548.2 591.2,543.3 592.9,545.6 603.9,550.3Z" fill="#222222"/>
<path d="M740.9,472.0 733.3,477.5 735.6,482.4 743.4,476.7Z" fill="#dedede"/>
<path d="M584.5,473.0 576.9,467.1 574.1,471.6 581.9,477.8Z" fill="#909090"/>
<path d="M628.2,156.7 634.8,154.4 634.8,163.4 628.1,165.7Z" fill="#868686"/>
<path d="M724.3,246.9 726.8,249.7 733.5,249.1 730.7,245.9Z" fill="#c4c4c4"/>
<path d="M630.9,246.8 633.4,244.2 627.0,242.8 624.2,245.8Z" fill="#c4c4c4"/>
<path d="M717.7,318.4 716.7,322.6 716.0,332.6 717.0,328.4Z" fill="#919191"/>
<path d="M626.5,319.9 625.5,315.6 625.0,325.6 626.0,329.9Z" fill="#212121"/>
<path d="M628.2,145.7 634.9,143.4 625.0,139.9 617.0,142.7Z" fill="#c4c4c4"/>
<path d="M736.4,512.1 726.6,517.3 726.5,528.3 736.4,523.2Z" fill="#929292"/>
<path d="M589.4,513.2 579.5,507.4 579.4,518.5 589.3,524.2Z" fill="#4c4c4c"/>
<path d="M709.8,377.0 704.9,380.7 704.0,391.1 709.0,387.3Z" fill="#b8b8b8"/>
<path d="M628.9,378.5 624.0,374.4 621.0,384.7 626.0,388.8Z" fill="#585858"/>
<path d="M670.9,181.4 684.2,181.0 684.2,185.3 674.3,185.6Z" fill="#c8c8c8"/>
<path d="M684.2,181.0 697.5,182.2 694.1,186.2 684.2,185.3Z" fill="#c7c7c7"/>
<path d="M725.3,543.9 713.9,548.1 713.0,551.5 724.2,547.3Z" fill="#868686"/>
<path d="M601.6,544.8 590.2,539.8 591.2,543.3 602.5,548.2Z" fill="#424242"/>
<path d="M628.4,344.1 625.4,339.9 624.8,350.0 627.8,354.2Z" fill="#363636"/>
<path d="M715.4,342.6 712.4,346.7 711.8,356.7 714.8,352.7Z" fill="#a0a0a0"/>
<path d="M706.7,430.3 698.5,434.3 699.7,443.8 708.4,439.5Z" fill="#dbdbdb"/>
<path d="M620.5,431.9 612.4,427.5 607.6,436.5 616.3,441.3Z" fill="#8f8f8f"/>
<path d="M628.2,145.7 634.9,143.4 634.8,154.4 628.2,156.7Z" fill="#868686"/>
<path d="M708.4,439.5 699.7,443.8 703.3,453.6 712.7,449.0Z" fill="#dfdfdf"/>
<path d="M616.3,441.3 607.6,436.5 604.0,445.8 613.4,450.9Z" fill="#979797"/>
<path d="M705.7,421.3 698.0,425.1 698.5,434.3 706.7,430.3Z" fill="#d5d5d5"/>
<path d="M624.1,422.9 616.4,418.7 612.4,427.5 620.5,431.9Z" fill="#868686"/>
<path d="M736.1,509.0 726.2,514.1 726.6,517.3 736.4,512.1Z" fill="#b0b0b0"/>
<path d="M589.8,510.0 579.9,504.3 579.5,507.4 589.4,513.2Z" fill="#646464"/>
<path d="M735.1,250.1 737.3,253.9 738.5,255.9 736.2,251.9Z" fill="#b0b0b0"/>
<path d="M618.7,250.4 620.9,246.7 619.3,248.4 617.0,252.2Z" fill="#575757"/>
<path d="M719.2,308.4 718.2,312.6 716.7,322.6 717.7,318.4Z" fill="#8c8c8c"/>
<path d="M627.0,309.9 626.0,305.6 625.5,315.6 626.5,319.9Z" fill="#1d1d1d"/>
<path d="M735.3,506.7 725.6,511.7 726.2,514.1 736.1,509.0Z" fill="#c4c4c4"/>
<path d="M590.5,507.7 580.8,502.0 579.9,504.3 589.8,510.0Z" fill="#7f7f7f"/>
<path d="M712.7,449.0 703.3,453.6 707.2,463.6 717.4,458.7Z" fill="#e1e1e1"/>
<path d="M613.4,450.9 604.0,445.8 599.9,455.1 610.1,460.7Z" fill="#9b9b9b"/>
<path d="M704.9,411.5 697.6,415.0 698.0,425.1 705.7,421.3Z" fill="#cfcfcf"/>
<path d="M627.4,412.9 620.1,408.9 616.4,418.7 624.1,422.9Z" fill="#808080"/>
<path d="M736.2,505.0 726.4,510.1 725.6,511.7 735.3,506.7Z" fill="#6c6c6c"/>
<path d="M589.9,506.0 580.0,500.3 580.8,502.0 590.5,507.7Z" fill="#262626"/>
<path d="M717.4,458.7 707.2,463.6 710.4,472.3 721.2,467.0Z" fill="#e0e0e0"/>
<path d="M610.1,460.7 599.9,455.1 596.6,463.3 607.4,469.2Z" fill="#989898"/>
<path d="M711.5,553.5 699.3,556.7 697.8,558.4 709.7,555.3Z" fill="#494949"/>
<path d="M616.1,554.2 603.9,550.3 605.6,552.2 617.5,556.0Z" fill="#1f1f1f"/>
<path d="M726.2,539.3 714.7,543.6 713.9,548.1 725.3,543.9Z" fill="#9a9a9a"/>
<path d="M600.9,540.2 589.3,535.2 590.2,539.8 601.6,544.8Z" fill="#535353"/>
<path d="M733.1,248.4 735.2,252.0 737.3,253.9 735.1,250.1Z" fill="#c3c3c3"/>
<path d="M622.6,248.7 624.6,245.2 620.9,246.7 618.7,250.4Z" fill="#848484"/>
<path d="M711.5,366.8 706.6,370.5 704.9,380.7 709.8,377.0Z" fill="#b3b3b3"/>
<path d="M631.7,368.2 626.9,364.3 624.0,374.4 628.9,378.5Z" fill="#525252"/>
<path d="M716.0,180.8 727.9,185.3 719.0,188.2 709.5,184.7Z" fill="#c5c5c5"/>
<path d="M640.5,182.7 652.5,178.9 658.9,183.1 649.4,186.2Z" fill="#cdcdcd"/>
<path d="M721.2,467.0 713.4,471.1 717.6,474.2 726.1,469.8Z" fill="#d3d3d3"/>
<path d="M604.5,467.8 596.6,463.3 591.8,465.8 600.3,470.6Z" fill="#c4c4c4"/>
<path d="M658.9,183.1 670.9,181.4 674.3,185.6 665.4,186.9Z" fill="#c9c9c9"/>
<path d="M697.5,182.2 709.5,184.7 703.0,188.0 694.1,186.2Z" fill="#c6c6c6"/>
<path d="M704.1,401.7 697.1,405.1 697.6,415.0 704.9,411.5Z" fill="#cccccc"/>
<path d="M630.2,403.1 623.2,399.3 620.1,408.9 627.4,412.9Z" fill="#7b7b7b"/>
<path d="M736.7,502.1 726.8,507.2 726.4,510.1 736.2,505.0Z" fill="#9f9f9f"/>
<path d="M589.6,503.1 579.7,497.4 580.0,500.3 589.9,506.0Z" fill="#4b4b4b"/>
<path d="M716.0,332.6 713.0,336.6 712.4,346.7 715.4,342.6Z" fill="#a0a0a0"/>
<path d="M629.0,334.1 626.0,329.9 625.4,339.9 628.4,344.1Z" fill="#363636"/>
<path d="M705.2,197.6 701.2,201.8 690.7,204.2 677.7,203.8 667.2,200.8 663.2,196.4 667.2,192.2 677.7,189.8 690.7,190.2 701.2,193.2Z" fill="#b7b7b7"/>
<path d="M722.7,298.4 721.7,302.7 718.2,312.6 719.2,308.4Z" fill="#828282"/>
<path d="M627.8,299.9 626.7,295.6 626.0,305.6 627.0,309.9Z" fill="#131313"/>
<path d="M726.8,249.7 728.3,252.6 735.3,252.4 733.5,249.1Z" fill="#c4c4c4"/>
<path d="M629.4,249.6 630.9,246.8 624.2,245.8 622.4,249.0Z" fill="#c4c4c4"/>
<path d="M704.0,391.1 697.3,394.4 697.1,405.1 704.1,401.7Z" fill="#c5c5c5"/>
<path d="M632.7,392.4 626.0,388.8 623.2,399.3 630.2,403.1Z" fill="#737373"/>
<path d="M736.9,495.1 727.0,500.2 726.8,507.2 736.7,502.1Z" fill="#b2b2b2"/>
<path d="M589.8,496.1 579.9,490.4 579.7,497.4 589.6,503.1Z" fill="#5d5d5d"/>
<path d="M622.7,159.4 628.2,156.7 628.1,165.7 622.7,168.4Z" fill="#828282"/>
<path d="M713.0,551.5 700.4,554.8 699.3,556.7 711.5,553.5Z" fill="#5c5c5c"/>
<path d="M615.0,552.2 602.5,548.2 603.9,550.3 616.1,554.2Z" fill="#2e2e2e"/>
<path d="M726.5,528.3 714.9,532.6 714.7,543.6 726.2,539.3Z" fill="#939393"/>
<path d="M600.9,529.2 589.3,524.2 589.3,535.2 600.9,540.2Z" fill="#575757"/>
<path d="M711.8,356.7 707.0,360.3 706.6,370.5 711.5,366.8Z" fill="#afafaf"/>
<path d="M632.6,358.1 627.8,354.2 626.9,364.3 631.7,368.2Z" fill="#4e4e4e"/>
<path d="M726.1,469.8 717.6,474.2 721.2,477.9 730.2,473.3Z" fill="#e1e1e1"/>
<path d="M600.3,470.6 591.8,465.8 587.8,469.0 596.7,474.2Z" fill="#bfbfbf"/>
<path d="M742.4,176.7 748.9,180.9 745.2,187.1 739.1,183.0Z" fill="#727272"/>
<path d="M619.6,177.1 626.0,173.2 629.3,179.7 623.2,183.5Z" fill="#b9b9b9"/>
<path d="M622.7,148.4 628.2,145.7 617.0,142.7 610.4,145.8Z" fill="#c4c4c4"/>
<path d="M716.7,322.6 713.7,326.5 713.0,336.6 716.0,332.6Z" fill="#9f9f9f"/>
<path d="M629.5,324.0 626.5,319.9 626.0,329.9 629.0,334.1Z" fill="#353535"/>
<path d="M742.5,170.1 748.9,174.2 748.9,180.9 742.4,176.7Z" fill="#3d3d3d"/>
<path d="M619.6,170.4 626.1,166.6 626.0,173.2 619.6,177.1Z" fill="#919191"/>
<path d="M736.7,487.9 726.9,493.0 727.0,500.2 736.9,495.1Z" fill="#bababa"/>
<path d="M590.4,488.9 580.5,483.2 579.9,490.4 589.8,496.1Z" fill="#656565"/>
<path d="M704.9,380.7 698.3,383.9 697.3,394.4 704.0,391.1Z" fill="#bfbfbf"/>
<path d="M635.5,382.0 628.9,378.5 626.0,388.8 632.7,392.4Z" fill="#6d6d6d"/>
<path d="M730.2,473.3 721.2,477.9 723.9,482.4 733.3,477.5Z" fill="#e5e5e5"/>
<path d="M596.7,474.2 587.8,469.0 584.5,473.0 593.8,478.5Z" fill="#b3b3b3"/>
<path d="M713.9,548.1 701.2,551.4 700.4,554.8 713.0,551.5Z" fill="#878787"/>
<path d="M614.3,548.8 601.6,544.8 602.5,548.2 615.0,552.2Z" fill="#505050"/>
<path d="M699.3,556.7 686.0,558.9 685.0,560.5 697.8,558.4Z" fill="#484848"/>
<path d="M629.4,557.2 616.1,554.2 617.5,556.0 630.3,558.9Z" fill="#292929"/>
<path d="M622.7,148.4 628.2,145.7 628.2,156.7 622.7,159.4Z" fill="#828282"/>
<path d="M698.0,425.1 688.6,427.9 688.7,437.3 698.5,434.3Z" fill="#d7d7d7"/>
<path d="M633.4,426.3 624.1,422.9 620.5,431.9 630.4,435.5Z" fill="#9a9a9a"/>
<path d="M735.6,482.4 725.9,487.4 726.9,493.0 736.7,487.9Z" fill="#cecece"/>
<path d="M591.6,483.4 581.9,477.8 580.5,483.2 590.4,488.9Z" fill="#7c7c7c"/>
<path d="M698.5,434.3 688.7,437.3 689.1,447.0 699.7,443.8Z" fill="#dedede"/>
<path d="M630.4,435.5 620.5,431.9 616.3,441.3 626.9,445.1Z" fill="#a2a2a2"/>
<path d="M733.3,477.5 723.9,482.4 725.9,487.4 735.6,482.4Z" fill="#e3e3e3"/>
<path d="M593.8,478.5 584.5,473.0 581.9,477.8 591.6,483.4Z" fill="#9d9d9d"/>
<path d="M712.4,346.7 707.6,350.2 707.0,360.3 711.8,356.7Z" fill="#acacac"/>
<path d="M633.2,348.0 628.4,344.1 627.8,354.2 632.6,358.1Z" fill="#4b4b4b"/>
<path d="M697.6,415.0 688.7,417.7 688.6,427.9 698.0,425.1Z" fill="#d2d2d2"/>
<path d="M636.3,416.1 627.4,412.9 624.1,422.9 633.4,426.3Z" fill="#939393"/>
<path d="M726.6,517.3 715.0,521.6 714.9,532.6 726.5,528.3Z" fill="#959595"/>
<path d="M601.0,518.2 589.4,513.2 589.3,524.2 600.9,529.2Z" fill="#595959"/>
<path d="M699.7,443.8 689.1,447.0 691.9,457.1 703.3,453.6Z" fill="#e2e2e2"/>
<path d="M626.9,445.1 616.3,441.3 613.4,450.9 624.7,455.1Z" fill="#a9a9a9"/>
<path d="M737.6,182.2 747.0,188.8 735.6,190.8 727.9,185.3Z" fill="#c2c2c2"/>
<path d="M621.4,185.1 630.8,179.0 640.5,182.7 632.9,187.7Z" fill="#cbcbcb"/>
<path d="M709.5,184.7 719.0,188.2 710.1,190.7 703.0,188.0Z" fill="#c5c5c5"/>
<path d="M649.4,186.2 658.9,183.1 665.4,186.9 658.3,189.2Z" fill="#c9c9c9"/>
<path d="M674.3,185.6 684.2,185.3 684.2,189.7 677.7,189.8Z" fill="#c8c8c8"/>
<path d="M684.2,185.3 694.1,186.2 690.7,190.2 684.2,189.7Z" fill="#c7c7c7"/>
<path d="M706.6,370.5 700.2,373.5 698.3,383.9 704.9,380.7Z" fill="#bababa"/>
<path d="M638.2,371.7 631.7,368.2 628.9,378.5 635.5,382.0Z" fill="#676767"/>
<path d="M697.1,405.1 688.6,407.7 688.7,417.7 697.6,415.0Z" fill="#cfcfcf"/>
<path d="M638.6,406.2 630.2,403.1 627.4,412.9 636.3,416.1Z" fill="#8f8f8f"/>
<path d="M737.3,253.9 738.0,257.8 739.2,259.8 738.5,255.9Z" fill="#bcbcbc"/>
<path d="M618.0,254.2 618.7,250.4 617.0,252.2 616.2,256.2Z" fill="#616161"/>
<path d="M630.1,314.0 627.0,309.9 626.5,319.9 629.5,324.0Z" fill="#303030"/>
<path d="M718.2,312.6 715.2,316.6 713.7,326.5 716.7,322.6Z" fill="#9b9b9b"/>
<path d="M743.7,161.7 748.7,165.0 748.7,174.0 743.6,170.7Z" fill="#353535"/>
<path d="M714.7,543.6 701.7,546.9 701.2,551.4 713.9,548.1Z" fill="#9a9a9a"/>
<path d="M613.8,544.3 600.9,540.2 601.6,544.8 614.3,548.8Z" fill="#616161"/>
<path d="M703.3,453.6 691.9,457.1 694.9,467.4 707.2,463.6Z" fill="#e4e4e4"/>
<path d="M624.7,455.1 613.4,450.9 610.1,460.7 622.3,465.2Z" fill="#acacac"/>
<path d="M735.2,252.0 735.9,255.7 738.0,257.8 737.3,253.9Z" fill="#cbcbcb"/>
<path d="M621.9,252.3 622.6,248.7 618.7,250.4 618.0,254.2Z" fill="#8b8b8b"/>
<path d="M713.4,471.1 704.2,474.4 707.7,477.8 717.6,474.2Z" fill="#d4d4d4"/>
<path d="M613.7,471.7 604.5,467.8 600.3,470.6 610.2,474.9Z" fill="#c7c7c7"/>
<path d="M726.2,514.1 714.7,518.4 715.0,521.6 726.6,517.3Z" fill="#b2b2b2"/>
<path d="M601.3,515.0 589.8,510.0 589.4,513.2 601.0,518.2Z" fill="#727272"/>
<path d="M697.3,394.4 689.1,396.8 688.6,407.7 697.1,405.1Z" fill="#c8c8c8"/>
<path d="M640.9,395.4 632.7,392.4 630.2,403.1 638.6,406.2Z" fill="#878787"/>
<path d="M725.6,511.7 714.2,516.0 714.7,518.4 726.2,514.1Z" fill="#c7c7c7"/>
<path d="M601.9,512.6 590.5,507.7 589.8,510.0 601.3,515.0Z" fill="#8c8c8c"/>
<path d="M700.4,554.8 686.8,557.0 686.0,558.9 699.3,556.7Z" fill="#5b5b5b"/>
<path d="M628.7,555.3 615.0,552.2 616.1,554.2 629.4,557.2Z" fill="#393939"/>
<path d="M713.0,336.6 708.2,340.2 707.6,350.2 712.4,346.7Z" fill="#acacac"/>
<path d="M633.8,337.9 629.0,334.1 628.4,344.1 633.2,348.0Z" fill="#4b4b4b"/>
<path d="M728.3,252.6 728.9,255.5 735.9,255.7 735.3,252.4Z" fill="#c4c4c4"/>
<path d="M628.9,252.5 629.4,249.6 622.4,249.0 621.9,252.3Z" fill="#c4c4c4"/>
<path d="M707.2,463.6 694.9,467.4 697.4,476.3 710.4,472.3Z" fill="#e3e3e3"/>
<path d="M622.3,465.2 610.1,460.7 607.4,469.2 620.4,474.0Z" fill="#aaaaaa"/>
<path d="M726.4,510.1 714.8,514.3 714.2,516.0 725.6,511.7Z" fill="#6e6e6e"/>
<path d="M601.4,510.9 589.9,506.0 590.5,507.7 601.9,512.6Z" fill="#333333"/>
<path d="M665.4,186.9 674.3,185.6 677.7,189.8 671.9,190.7Z" fill="#c9c9c9"/>
<path d="M694.1,186.2 703.0,188.0 696.5,191.4 690.7,190.2Z" fill="#c6c6c6"/>
<path d="M743.7,150.7 748.8,154.0 761.7,152.7 755.6,148.7Z" fill="#c4c4c4"/>
<path d="M686.0,558.9 672.0,560.1 671.5,561.6 685.0,560.5Z" fill="#454545"/>
<path d="M643.4,559.2 629.4,557.2 630.3,558.9 643.8,560.8Z" fill="#323232"/>
<path d="M707.0,360.3 700.6,363.4 700.2,373.5 706.6,370.5Z" fill="#b6b6b6"/>
<path d="M639.0,361.5 632.6,358.1 631.7,368.2 638.2,371.7Z" fill="#636363"/>
<path d="M726.8,507.2 715.2,511.5 714.8,514.3 726.4,510.1Z" fill="#a2a2a2"/>
<path d="M601.2,508.1 589.6,503.1 589.9,506.0 601.4,510.9Z" fill="#5a5a5a"/>
<path d="M743.7,150.7 748.8,154.0 748.7,165.0 743.7,161.7Z" fill="#353535"/>
<path d="M698.3,383.9 690.4,386.3 689.1,396.8 697.3,394.4Z" fill="#c2c2c2"/>
<path d="M643.4,384.9 635.5,382.0 632.7,392.4 640.9,395.4Z" fill="#818181"/>
<path d="M618.5,162.2 622.7,159.4 622.7,168.4 618.5,171.2Z" fill="#7d7d7d"/>
<path d="M721.7,302.7 718.6,306.8 715.2,316.6 718.2,312.6Z" fill="#919191"/>
<path d="M630.9,304.2 627.8,299.9 627.0,309.9 630.1,314.0Z" fill="#272727"/>
<path d="M714.9,532.6 701.9,536.0 701.7,546.9 714.7,543.6Z" fill="#949494"/>
<path d="M613.8,533.3 600.9,529.2 600.9,540.2 613.8,544.3Z" fill="#646464"/>
<path d="M727.9,185.3 735.6,190.8 725.1,192.6 719.0,188.2Z" fill="#c2c2c2"/>
<path d="M632.9,187.7 640.5,182.7 649.4,186.2 643.3,190.1Z" fill="#cccccc"/>
<path d="M688.6,427.9 678.1,429.8 677.5,439.2 688.7,437.3Z" fill="#d6d6d6"/>
<path d="M644.0,428.8 633.4,426.3 630.4,435.5 641.5,438.2Z" fill="#ababab"/>
<path d="M688.7,417.7 678.7,419.5 678.1,429.8 688.6,427.9Z" fill="#d1d1d1"/>
<path d="M646.3,418.5 636.3,416.1 633.4,426.3 644.0,428.8Z" fill="#a5a5a5"/>
<path d="M672.0,560.1 657.7,560.2 657.7,561.7 671.5,561.6Z" fill="#404040"/>
<path d="M657.7,560.2 643.4,559.2 643.8,560.8 657.7,561.7Z" fill="#3a3a3a"/>
<path d="M701.2,551.4 687.3,553.7 686.8,557.0 700.4,554.8Z" fill="#858585"/>
<path d="M628.2,551.9 614.3,548.8 615.0,552.2 628.7,555.3Z" fill="#5d5d5d"/>
<path d="M688.7,437.3 677.5,439.2 677.3,449.1 689.1,447.0Z" fill="#dcdcdc"/>
<path d="M641.5,438.2 630.4,435.5 626.9,445.1 638.7,447.9Z" fill="#b3b3b3"/>
<path d="M717.6,474.2 707.7,477.8 710.7,481.8 721.2,477.9Z" fill="#e2e2e2"/>
<path d="M610.2,474.9 600.3,470.6 596.7,474.2 607.2,478.7Z" fill="#c6c6c6"/>
<path d="M612.0,160.3 605.4,159.3 605.3,169.3 611.9,170.3Z" fill="#6f6f6f"/>
<path d="M688.6,407.7 679.1,409.3 678.7,419.5 688.7,417.7Z" fill="#cecece"/>
<path d="M648.2,408.4 638.6,406.2 636.3,416.1 646.3,418.5Z" fill="#a2a2a2"/>
<path d="M713.7,326.5 708.9,330.1 708.2,340.2 713.0,336.6Z" fill="#ababab"/>
<path d="M634.3,327.9 629.5,324.0 629.0,334.1 633.8,337.9Z" fill="#4a4a4a"/>
<path d="M727.0,500.2 715.4,504.5 715.2,511.5 726.8,507.2Z" fill="#b6b6b6"/>
<path d="M601.4,501.1 589.8,496.1 589.6,503.1 601.2,508.1Z" fill="#6d6d6d"/>
<path d="M689.1,447.0 677.3,449.1 679.1,459.4 691.9,457.1Z" fill="#e1e1e1"/>
<path d="M638.7,447.9 626.9,445.1 624.7,455.1 637.6,458.1Z" fill="#b9b9b9"/>
<path d="M686.8,557.0 672.4,558.2 672.0,560.1 686.0,558.9Z" fill="#575757"/>
<path d="M643.0,557.3 628.7,555.3 629.4,557.2 643.4,559.2Z" fill="#434343"/>
<path d="M707.6,350.2 701.2,353.3 700.6,363.4 707.0,360.3Z" fill="#b3b3b3"/>
<path d="M639.6,351.4 633.2,348.0 632.6,358.1 639.0,361.5Z" fill="#606060"/>
<path d="M618.6,151.2 622.7,148.4 610.4,145.8 605.4,149.3Z" fill="#c4c4c4"/>
<path d="M700.2,373.5 692.3,375.9 690.4,386.3 698.3,383.9Z" fill="#bebebe"/>
<path d="M646.0,374.5 638.2,371.7 635.5,382.0 643.4,384.9Z" fill="#7c7c7c"/>
<path d="M689.1,396.8 679.9,398.4 679.1,409.3 688.6,407.7Z" fill="#c7c7c7"/>
<path d="M650.1,397.5 640.9,395.4 638.6,406.2 648.2,408.4Z" fill="#9a9a9a"/>
<path d="M658.3,189.2 665.4,186.9 671.9,190.7 667.2,192.2Z" fill="#c9c9c9"/>
<path d="M703.0,188.0 710.1,190.7 701.2,193.2 696.5,191.4Z" fill="#c5c5c5"/>
<path d="M618.6,151.2 622.7,148.4 622.7,159.4 618.5,162.2Z" fill="#7d7d7d"/>
<path d="M721.2,477.9 710.7,481.8 713.0,486.4 723.9,482.4Z" fill="#e5e5e5"/>
<path d="M607.2,478.7 596.7,474.2 593.8,478.5 604.8,483.2Z" fill="#bcbcbc"/>
<path d="M618.5,161.2 612.0,160.3 611.9,170.3 618.5,171.2Z" fill="#6f6f6f"/>
<path d="M701.7,546.9 687.7,549.2 687.3,553.7 701.2,551.4Z" fill="#989898"/>
<path d="M627.9,547.5 613.8,544.3 614.3,548.8 628.2,551.9Z" fill="#6f6f6f"/>
<path d="M726.9,493.0 715.3,497.3 715.4,504.5 727.0,500.2Z" fill="#bdbdbd"/>
<path d="M601.9,493.8 590.4,488.9 589.8,496.1 601.4,501.1Z" fill="#747474"/>
<path d="M748.9,180.9 752.9,185.5 748.9,191.5 745.2,187.1Z" fill="#646464"/>
<path d="M615.6,181.3 619.6,177.1 623.2,183.5 619.5,187.6Z" fill="#b1b1b1"/>
<path d="M715.0,521.6 702.0,524.9 701.9,536.0 714.9,532.6Z" fill="#959595"/>
<path d="M613.9,522.3 601.0,518.2 600.9,529.2 613.8,533.3Z" fill="#656565"/>
<path d="M678.1,429.8 666.8,430.6 665.6,440.1 677.5,439.2Z" fill="#d1d1d1"/>
<path d="M655.3,430.2 644.0,428.8 641.5,438.2 653.4,439.7Z" fill="#bbbbbb"/>
<path d="M678.7,419.5 668.0,420.2 666.8,430.6 678.1,429.8Z" fill="#cccccc"/>
<path d="M657.0,419.9 646.3,418.5 644.0,428.8 655.3,430.2Z" fill="#b5b5b5"/>
<path d="M691.9,457.1 679.1,459.4 681.1,469.9 694.9,467.4Z" fill="#e3e3e3"/>
<path d="M637.6,458.1 624.7,455.1 622.3,465.2 636.2,468.5Z" fill="#bcbcbc"/>
<path d="M726.3,293.0 723.0,297.2 718.6,306.8 721.7,302.7Z" fill="#838383"/>
<path d="M630.6,294.4 627.3,290.0 627.8,299.9 630.9,304.2Z" fill="#1b1b1b"/>
<path d="M739.3,261.9 738.5,265.8 737.9,268.8 738.6,264.8Z" fill="#858585"/>
<path d="M616.5,262.2 615.7,258.1 615.6,261.2 616.4,265.2Z" fill="#151515"/>
<path d="M672.4,558.2 657.7,558.3 657.7,560.2 672.0,560.1Z" fill="#525252"/>
<path d="M657.7,558.3 643.0,557.3 643.4,559.2 657.7,560.2Z" fill="#4b4b4b"/>
<path d="M612.0,150.3 605.4,149.3 605.4,159.3 612.0,160.3Z" fill="#6f6f6f"/>
<path d="M679.1,409.3 668.9,410.0 668.0,420.2 678.7,419.5Z" fill="#c8c8c8"/>
<path d="M658.4,409.7 648.2,408.4 646.3,418.5 657.0,419.9Z" fill="#b2b2b2"/>
<path d="M704.2,474.4 693.9,477.1 696.6,480.7 707.7,477.8Z" fill="#d4d4d4"/>
<path d="M624.0,475.0 613.7,471.7 610.2,474.9 621.3,478.4Z" fill="#c9c9c9"/>
<path d="M677.5,439.2 665.6,440.1 664.5,450.0 677.3,449.1Z" fill="#d7d7d7"/>
<path d="M653.4,439.7 641.5,438.2 638.7,447.9 651.5,449.6Z" fill="#c2c2c2"/>
<path d="M690.4,386.3 681.4,387.8 679.9,398.4 689.1,396.8Z" fill="#c1c1c1"/>
<path d="M652.4,386.9 643.4,384.9 640.9,395.4 650.1,397.5Z" fill="#949494"/>
<path d="M723.9,482.4 713.0,486.4 714.6,491.6 725.9,487.4Z" fill="#e5e5e5"/>
<path d="M604.8,483.2 593.8,478.5 591.6,483.4 602.9,488.3Z" fill="#aaaaaa"/>
<path d="M719.0,188.2 725.1,192.6 714.6,194.0 710.1,190.7Z" fill="#c3c3c3"/>
<path d="M643.3,190.1 649.4,186.2 658.3,189.2 653.8,192.1Z" fill="#c8c8c8"/>
<path d="M739.2,259.8 738.5,263.8 738.5,265.8 739.3,261.9Z" fill="#9f9f9f"/>
<path d="M617.0,260.1 616.2,256.2 615.7,258.1 616.5,262.2Z" fill="#303030"/>
<path d="M725.9,487.4 714.6,491.6 715.3,497.3 726.9,493.0Z" fill="#d1d1d1"/>
<path d="M602.9,488.3 591.6,483.4 590.4,488.9 601.9,493.8Z" fill="#8b8b8b"/>
<path d="M715.2,316.6 710.3,320.1 708.9,330.1 713.7,326.5Z" fill="#a6a6a6"/>
<path d="M634.9,317.9 630.1,314.0 629.5,324.0 634.3,327.9Z" fill="#454545"/>
<path d="M616.1,173.8 618.5,171.2 605.3,169.3 602.4,172.4Z" fill="#c4c4c4"/>
<path d="M668.0,420.2 657.0,419.9 655.3,430.2 666.8,430.6Z" fill="#c2c2c2"/>
<path d="M666.8,430.6 655.3,430.2 653.4,439.7 665.6,440.1Z" fill="#c8c8c8"/>
<path d="M687.3,553.7 672.7,554.9 672.4,558.2 686.8,557.0Z" fill="#818181"/>
<path d="M642.8,554.0 628.2,551.9 628.7,555.3 643.0,557.3Z" fill="#696969"/>
<path d="M700.6,363.4 692.8,365.7 692.3,375.9 700.2,373.5Z" fill="#b9b9b9"/>
<path d="M646.8,364.3 639.0,361.5 638.2,371.7 646.0,374.5Z" fill="#777777"/>
<path d="M748.9,174.2 752.9,178.6 752.9,185.5 748.9,180.9Z" fill="#2c2c2c"/>
<path d="M615.6,174.5 619.6,170.4 619.6,177.1 615.6,181.3Z" fill="#878787"/>
<path d="M738.0,257.8 737.3,261.6 738.5,263.8 739.2,259.8Z" fill="#c7c7c7"/>
<path d="M618.7,258.1 618.0,254.2 616.2,256.2 617.0,260.1Z" fill="#6b6b6b"/>
<path d="M668.9,410.0 658.4,409.7 657.0,419.9 668.0,420.2Z" fill="#bfbfbf"/>
<path d="M728.9,255.5 728.3,258.4 735.3,259.0 735.9,255.7Z" fill="#c4c4c4"/>
<path d="M629.4,255.4 628.9,252.5 621.9,252.3 622.4,255.6Z" fill="#c4c4c4"/>
<path d="M708.2,340.2 701.8,343.1 701.2,353.3 707.6,350.2Z" fill="#b3b3b3"/>
<path d="M640.2,341.3 633.8,337.9 633.2,348.0 639.6,351.4Z" fill="#606060"/>
<path d="M679.9,398.4 670.0,399.1 668.9,410.0 679.1,409.3Z" fill="#c1c1c1"/>
<path d="M660.0,398.8 650.1,397.5 648.2,408.4 658.4,409.7Z" fill="#aaaaaa"/>
<path d="M694.9,467.4 681.1,469.9 682.7,478.9 697.4,476.3Z" fill="#e1e1e1"/>
<path d="M636.2,468.5 622.3,465.2 620.4,474.0 635.1,477.5Z" fill="#bababa"/>
<path d="M665.6,440.1 653.4,439.7 651.5,449.6 664.5,450.0Z" fill="#cecece"/>
<path d="M714.7,518.4 701.8,521.7 702.0,524.9 715.0,521.6Z" fill="#b3b3b3"/>
<path d="M614.2,519.1 601.3,515.0 601.0,518.2 613.9,522.3Z" fill="#7f7f7f"/>
<path d="M735.9,255.7 735.2,259.3 737.3,261.6 738.0,257.8Z" fill="#d3d3d3"/>
<path d="M622.6,256.0 621.9,252.3 618.0,254.2 618.7,258.1Z" fill="#939393"/>
<path d="M677.3,449.1 664.5,450.0 665.3,460.3 679.1,459.4Z" fill="#dcdcdc"/>
<path d="M651.5,449.6 638.7,447.9 637.6,458.1 651.3,459.9Z" fill="#c8c8c8"/>
<path d="M714.2,516.0 701.4,519.2 701.8,521.7 714.7,518.4Z" fill="#c7c7c7"/>
<path d="M614.7,516.6 601.9,512.6 601.3,515.0 614.2,519.1Z" fill="#989898"/>
<path d="M748.7,165.0 752.2,168.5 752.2,177.5 748.7,174.0Z" fill="#292929"/>
<path d="M670.0,399.1 660.0,398.8 658.4,409.7 668.9,410.0Z" fill="#b7b7b7"/>
<path d="M618.6,151.2 612.0,150.3 612.0,160.3 618.5,161.2Z" fill="#6f6f6f"/>
<path d="M701.9,536.0 687.9,538.3 687.7,549.2 701.7,546.9Z" fill="#929292"/>
<path d="M627.9,536.5 613.8,533.3 613.8,544.3 627.9,547.5Z" fill="#6f6f6f"/>
<path d="M714.8,514.3 701.9,517.7 701.4,519.2 714.2,516.0Z" fill="#6f6f6f"/>
<path d="M614.3,515.0 601.4,510.9 601.9,512.6 614.7,516.6Z" fill="#3f3f3f"/>
<path d="M692.3,375.9 683.5,377.4 681.4,387.8 690.4,386.3Z" fill="#bcbcbc"/>
<path d="M654.9,376.6 646.0,374.5 643.4,384.9 652.4,386.9Z" fill="#8f8f8f"/>
<path d="M672.7,554.9 657.8,555.0 657.7,558.3 672.4,558.2Z" fill="#7b7b7b"/>
<path d="M657.8,555.0 642.8,554.0 643.0,557.3 657.7,558.3Z" fill="#737373"/>
<path d="M664.5,450.0 651.5,449.6 651.3,459.9 665.3,460.3Z" fill="#d3d3d3"/>
<path d="M681.4,387.8 671.8,388.5 670.0,399.1 679.9,398.4Z" fill="#bbbbbb"/>
<path d="M662.0,388.2 652.4,386.9 650.1,397.5 660.0,398.8Z" fill="#a4a4a4"/>
<path d="M732.3,247.5 731.3,251.4 727.9,259.5 728.9,255.5Z" fill="#747474"/>
<path d="M633.2,248.5 632.3,244.5 628.9,252.5 629.8,256.5Z" fill="#1b1b1b"/>
<path d="M687.7,549.2 672.9,550.5 672.7,554.9 687.3,553.7Z" fill="#949494"/>
<path d="M642.6,549.6 627.9,547.5 628.2,551.9 642.8,554.0Z" fill="#7b7b7b"/>
<path d="M679.1,459.4 665.3,460.3 666.2,470.9 681.1,469.9Z" fill="#dedede"/>
<path d="M651.3,459.9 637.6,458.1 636.2,468.5 651.1,470.4Z" fill="#cacaca"/>
<path d="M715.2,511.5 702.2,514.9 701.9,517.7 714.8,514.3Z" fill="#a3a3a3"/>
<path d="M614.2,512.2 601.2,508.1 601.4,510.9 614.3,515.0Z" fill="#696969"/>
<path d="M734.9,277.6 732.7,281.3 731.4,284.1 733.5,280.5Z" fill="#676767"/>
<path d="M621.3,277.9 619.1,274.1 620.5,277.1 622.6,280.8Z" fill="#0f0f0f"/>
<path d="M707.7,477.8 696.6,480.7 698.9,484.8 710.7,481.8Z" fill="#e2e2e2"/>
<path d="M621.3,478.4 610.2,474.9 607.2,478.7 619.0,482.4Z" fill="#cbcbcb"/>
<path d="M701.2,353.3 693.4,355.6 692.8,365.7 700.6,363.4Z" fill="#b6b6b6"/>
<path d="M647.4,354.2 639.6,351.4 639.0,361.5 646.8,364.3Z" fill="#747474"/>
<path d="M671.8,388.5 662.0,388.2 660.0,398.8 670.0,399.1Z" fill="#b2b2b2"/>
<path d="M718.6,306.8 713.5,310.4 710.3,320.1 715.2,316.6Z" fill="#9c9c9c"/>
<path d="M635.9,308.1 630.9,304.2 630.1,314.0 634.9,317.9Z" fill="#3c3c3c"/>
<path d="M708.9,330.1 702.4,333.1 701.8,343.1 708.2,340.2Z" fill="#b2b2b2"/>
<path d="M640.7,331.2 634.3,327.9 633.8,337.9 640.2,341.3Z" fill="#5f5f5f"/>
<path d="M748.8,154.0 752.3,157.5 765.9,156.8 761.7,152.7Z" fill="#c4c4c4"/>
<path d="M710.1,190.7 714.6,194.0 704.2,195.3 701.2,193.2Z" fill="#c3c3c3"/>
<path d="M653.8,192.1 658.3,189.2 667.2,192.2 664.2,194.1Z" fill="#c8c8c8"/>
<path d="M748.8,154.0 752.3,157.5 752.2,168.5 748.7,165.0Z" fill="#292929"/>
<path d="M736.1,274.7 733.9,278.4 732.7,281.3 734.9,277.6Z" fill="#6e6e6e"/>
<path d="M620.1,275.0 617.9,271.1 619.1,274.1 621.3,277.9Z" fill="#0f0f0f"/>
<path d="M665.3,460.3 651.3,459.9 651.1,470.4 666.2,470.9Z" fill="#d6d6d6"/>
<path d="M692.8,365.7 684.0,367.2 683.5,377.4 692.3,375.9Z" fill="#b8b8b8"/>
<path d="M655.6,366.3 646.8,364.3 646.0,374.5 654.9,376.6Z" fill="#8a8a8a"/>
<path d="M683.5,377.4 674.0,378.0 671.8,388.5 681.4,387.8Z" fill="#b6b6b6"/>
<path d="M664.3,377.7 654.9,376.6 652.4,386.9 662.0,388.2Z" fill="#9f9f9f"/>
<path d="M693.9,477.1 682.7,478.9 684.6,482.6 696.6,480.7Z" fill="#d3d3d3"/>
<path d="M635.1,477.5 624.0,475.0 621.3,478.4 633.3,481.1Z" fill="#cccccc"/>
<path d="M715.4,504.5 702.4,507.8 702.2,514.9 715.2,511.5Z" fill="#b6b6b6"/>
<path d="M614.4,505.2 601.4,501.1 601.2,508.1 614.2,512.2Z" fill="#7c7c7c"/>
<path d="M657.8,550.6 642.6,549.6 642.8,554.0 657.8,555.0Z" fill="#858585"/>
<path d="M672.9,550.5 657.8,550.6 657.8,555.0 672.7,554.9Z" fill="#8e8e8e"/>
<path d="M681.1,469.9 666.2,470.9 667.0,480.0 682.7,478.9Z" fill="#dddddd"/>
<path d="M651.1,470.4 636.2,468.5 635.1,477.5 650.9,479.5Z" fill="#c8c8c8"/>
<path d="M726.6,292.4 723.5,295.5 721.9,298.2 724.9,295.1Z" fill="#686868"/>
<path d="M630.5,292.7 627.4,289.4 628.7,292.3 631.7,295.5Z" fill="#0f0f0f"/>
<path d="M702.0,524.9 687.9,527.2 687.9,538.3 701.9,536.0Z" fill="#949494"/>
<path d="M628.0,525.4 613.9,522.3 613.8,533.3 627.9,536.5Z" fill="#717171"/>
<path d="M736.0,238.6 735.0,242.5 731.3,251.4 732.3,247.5Z" fill="#606060"/>
<path d="M633.0,239.5 632.0,235.4 632.3,244.5 633.2,248.5Z" fill="#0f0f0f"/>
<path d="M674.0,378.0 664.3,377.7 662.0,388.2 671.8,388.5Z" fill="#adadad"/>
<path d="M737.1,271.8 734.8,275.6 733.9,278.4 736.1,274.7Z" fill="#757575"/>
<path d="M619.2,272.1 616.9,268.2 617.9,271.1 620.1,275.0Z" fill="#0f0f0f"/>
<path d="M687.9,538.3 673.1,539.5 672.9,550.5 687.7,549.2Z" fill="#8f8f8f"/>
<path d="M642.7,538.6 627.9,536.5 627.9,547.5 642.6,549.6Z" fill="#797979"/>
<path d="M710.7,481.8 698.9,484.8 700.6,489.6 713.0,486.4Z" fill="#e5e5e5"/>
<path d="M619.0,482.4 607.2,478.7 604.8,483.2 617.1,487.1Z" fill="#c5c5c5"/>
<path d="M701.8,343.1 694.0,345.4 693.4,355.6 701.2,353.3Z" fill="#b6b6b6"/>
<path d="M648.0,344.1 640.2,341.3 639.6,351.4 647.4,354.2Z" fill="#747474"/>
<path d="M666.2,470.9 651.1,470.4 650.9,479.5 667.0,480.0Z" fill="#d4d4d4"/>
<path d="M728.3,289.6 725.0,292.9 723.5,295.5 726.6,292.4Z" fill="#656565"/>
<path d="M629.0,290.0 625.7,286.6 627.4,289.4 630.5,292.7Z" fill="#0f0f0f"/>
<path d="M737.9,268.8 735.6,272.6 734.8,275.6 737.1,271.8Z" fill="#818181"/>
<path d="M618.6,269.1 616.4,265.2 616.9,268.2 619.2,272.1Z" fill="#161616"/>
<path d="M715.3,497.3 702.4,500.6 702.4,507.8 715.4,504.5Z" fill="#bebebe"/>
<path d="M614.8,497.9 601.9,493.8 601.4,501.1 614.4,505.2Z" fill="#838383"/>
<path d="M710.3,320.1 703.8,323.1 702.4,333.1 708.9,330.1Z" fill="#aeaeae"/>
<path d="M641.4,321.2 634.9,317.9 634.3,327.9 640.7,331.2Z" fill="#5a5a5a"/>
<path d="M701.8,521.7 687.8,524.0 687.9,527.2 702.0,524.9Z" fill="#b1b1b1"/>
<path d="M628.2,522.2 614.2,519.1 613.9,522.3 628.0,525.4Z" fill="#8b8b8b"/>
<path d="M747.0,188.8 750.2,196.0 738.2,196.6 735.6,190.8Z" fill="#c0c0c0"/>
<path d="M618.2,192.0 621.4,185.1 632.9,187.7 630.2,193.4Z" fill="#c9c9c9"/>
<path d="M701.4,519.2 687.6,521.5 687.8,524.0 701.8,521.7Z" fill="#c6c6c6"/>
<path d="M628.5,519.8 614.7,516.6 614.2,519.1 628.2,522.2Z" fill="#a3a3a3"/>
<path d="M684.0,367.2 674.6,367.8 674.0,378.0 683.5,377.4Z" fill="#b2b2b2"/>
<path d="M665.0,367.5 655.6,366.3 654.9,376.6 664.3,377.7Z" fill="#9b9b9b"/>
<path d="M728.3,258.4 726.8,261.2 733.5,262.2 735.3,259.0Z" fill="#c4c4c4"/>
<path d="M630.9,258.3 629.4,255.4 622.4,255.6 624.2,258.9Z" fill="#c4c4c4"/>
<path d="M723.0,297.2 717.7,301.0 713.5,310.4 718.6,306.8Z" fill="#8e8e8e"/>
<path d="M635.9,298.5 630.6,294.4 630.9,304.2 635.9,308.1Z" fill="#2f2f2f"/>
<path d="M713.0,486.4 700.6,489.6 701.9,494.9 714.6,491.6Z" fill="#e5e5e5"/>
<path d="M617.1,487.1 604.8,483.2 602.9,488.3 615.6,492.3Z" fill="#b6b6b6"/>
<path d="M693.4,355.6 684.6,357.0 684.0,367.2 692.8,365.7Z" fill="#b5b5b5"/>
<path d="M656.2,356.2 647.4,354.2 646.8,364.3 655.6,366.3Z" fill="#878787"/>
<path d="M738.5,265.8 736.3,269.6 735.6,272.6 737.9,268.8Z" fill="#909090"/>
<path d="M618.7,266.1 616.5,262.2 616.4,265.2 618.6,269.1Z" fill="#242424"/>
<path d="M701.9,517.7 687.9,520.0 687.6,521.5 701.4,519.2Z" fill="#6d6d6d"/>
<path d="M628.3,518.2 614.3,515.0 614.7,516.6 628.5,519.8Z" fill="#4a4a4a"/>
<path d="M714.6,491.6 701.9,494.9 702.4,500.6 715.3,497.3Z" fill="#d2d2d2"/>
<path d="M615.6,492.3 602.9,488.3 601.9,493.8 614.8,497.9Z" fill="#999999"/>
<path d="M673.1,539.5 657.9,539.6 657.8,550.6 672.9,550.5Z" fill="#898989"/>
<path d="M657.9,539.6 642.7,538.6 642.6,549.6 657.8,550.6Z" fill="#828282"/>
<path d="M729.9,286.9 726.5,290.2 725.0,292.9 728.3,289.6Z" fill="#656565"/>
<path d="M627.5,287.2 624.1,283.7 625.7,286.6 629.0,290.0Z" fill="#0f0f0f"/>
<path d="M682.7,478.9 671.0,479.9 671.9,483.7 684.6,482.6Z" fill="#d3d3d3"/>
<path d="M646.9,479.1 635.1,477.5 633.3,481.1 646.0,482.9Z" fill="#cecece"/>
<path d="M674.6,367.8 665.0,367.5 664.3,377.7 674.0,378.0Z" fill="#a8a8a8"/>
<path d="M614.7,176.5 616.1,173.8 602.4,172.4 600.7,175.6Z" fill="#c4c4c4"/>
<path d="M735.6,190.8 738.2,196.6 727.2,197.3 725.1,192.6Z" fill="#bfbfbf"/>
<path d="M630.2,193.4 632.9,187.7 643.3,190.1 641.2,194.7Z" fill="#cacaca"/>
<path d="M738.5,263.8 736.2,267.6 736.3,269.6 738.5,265.8Z" fill="#ababab"/>
<path d="M619.3,264.1 617.0,260.1 616.5,262.2 618.7,266.1Z" fill="#3f3f3f"/>
<path d="M696.6,480.7 684.6,482.6 686.2,486.9 698.9,484.8Z" fill="#e1e1e1"/>
<path d="M633.3,481.1 621.3,478.4 619.0,482.4 631.8,485.3Z" fill="#d1d1d1"/>
<path d="M737.3,261.6 735.1,265.3 736.2,267.6 738.5,263.8Z" fill="#d0d0d0"/>
<path d="M620.9,261.9 618.7,258.1 617.0,260.1 619.3,264.1Z" fill="#777777"/>
<path d="M735.2,259.3 733.1,262.8 735.1,265.3 737.3,261.6Z" fill="#dadada"/>
<path d="M624.6,259.6 622.6,256.0 618.7,258.1 620.9,261.9Z" fill="#9b9b9b"/>
<path d="M702.2,514.9 688.2,517.2 687.9,520.0 701.9,517.7Z" fill="#a1a1a1"/>
<path d="M628.2,515.4 614.2,512.2 614.3,515.0 628.3,518.2Z" fill="#777777"/>
<path d="M687.9,527.2 673.1,528.5 673.1,539.5 687.9,538.3Z" fill="#909090"/>
<path d="M642.8,527.6 628.0,525.4 627.9,536.5 642.7,538.6Z" fill="#7b7b7b"/>
<path d="M702.4,333.1 694.6,335.3 694.0,345.4 701.8,343.1Z" fill="#b5b5b5"/>
<path d="M648.5,334.0 640.7,331.2 640.2,341.3 648.0,344.1Z" fill="#737373"/>
<path d="M731.4,284.1 728.0,287.5 726.5,290.2 729.9,286.9Z" fill="#686868"/>
<path d="M626.0,284.4 622.6,280.8 624.1,283.7 627.5,287.2Z" fill="#0f0f0f"/>
<path d="M725.1,192.6 727.2,197.3 716.2,197.5 714.6,194.0Z" fill="#c2c2c2"/>
<path d="M641.2,194.7 643.3,190.1 653.8,192.1 652.2,195.5Z" fill="#c7c7c7"/>
<path d="M671.0,479.9 658.9,480.0 659.0,483.8 671.9,483.7Z" fill="#d1d1d1"/>
<path d="M658.9,480.0 646.9,479.1 646.0,482.9 659.0,483.8Z" fill="#d0d0d0"/>
<path d="M684.6,357.0 675.2,357.7 674.6,367.8 684.0,367.2Z" fill="#afafaf"/>
<path d="M665.6,357.4 656.2,356.2 655.6,366.3 665.0,367.5Z" fill="#989898"/>
<path d="M752.9,185.5 754.2,190.1 750.2,196.0 748.9,191.5Z" fill="#575757"/>
<path d="M614.2,185.9 615.6,181.3 619.5,187.6 618.2,192.0Z" fill="#a7a7a7"/>
<path d="M713.5,310.4 706.8,313.4 703.8,323.1 710.3,320.1Z" fill="#a3a3a3"/>
<path d="M642.6,311.5 635.9,308.1 634.9,317.9 641.4,321.2Z" fill="#515151"/>
<path d="M694.0,345.4 685.2,346.9 684.6,357.0 693.4,355.6Z" fill="#b5b5b5"/>
<path d="M656.8,346.1 648.0,344.1 647.4,354.2 656.2,356.2Z" fill="#878787"/>
<path d="M752.2,168.5 754.0,172.1 754.0,181.1 752.2,177.5Z" fill="#1e1e1e"/>
<path d="M732.7,281.3 729.2,284.8 728.0,287.5 731.4,284.1Z" fill="#707070"/>
<path d="M624.8,281.6 621.3,277.9 622.6,280.8 626.0,284.4Z" fill="#111111"/>
<path d="M702.4,507.8 688.4,510.1 688.2,517.2 702.2,514.9Z" fill="#b4b4b4"/>
<path d="M628.4,508.3 614.4,505.2 614.2,512.2 628.2,515.4Z" fill="#898989"/>
<path d="M714.6,194.0 716.2,197.5 705.2,197.6 704.2,195.3Z" fill="#c2c2c2"/>
<path d="M652.2,195.5 653.8,192.1 664.2,194.1 663.2,196.4Z" fill="#c7c7c7"/>
<path d="M675.2,357.7 665.6,357.4 665.0,367.5 674.6,367.8Z" fill="#a5a5a5"/>
<path d="M687.8,524.0 673.1,525.2 673.1,528.5 687.9,527.2Z" fill="#adadad"/>
<path d="M642.9,524.3 628.2,522.2 628.0,525.4 642.8,527.6Z" fill="#969696"/>
<path d="M731.3,251.4 728.5,255.1 725.1,263.2 727.9,259.5Z" fill="#7f7f7f"/>
<path d="M636.1,252.3 633.2,248.5 629.8,256.5 632.7,260.4Z" fill="#292929"/>
<path d="M687.6,521.5 673.0,522.7 673.1,525.2 687.8,524.0Z" fill="#c2c2c2"/>
<path d="M643.1,521.8 628.5,519.8 628.2,522.2 642.9,524.3Z" fill="#adadad"/>
<path d="M723.5,295.5 719.2,298.4 717.7,301.0 721.9,298.2Z" fill="#6f6f6f"/>
<path d="M634.8,295.8 630.5,292.7 631.7,295.5 635.9,298.5Z" fill="#1a1a1a"/>
<path d="M673.1,528.5 658.0,528.6 657.9,539.6 673.1,539.5Z" fill="#8b8b8b"/>
<path d="M658.0,528.6 642.8,527.6 642.7,538.6 657.9,539.6Z" fill="#848484"/>
<path d="M698.9,484.8 686.2,486.9 687.3,491.8 700.6,489.6Z" fill="#e5e5e5"/>
<path d="M631.8,485.3 619.0,482.4 617.1,487.1 630.5,490.0Z" fill="#cecece"/>
<path d="M687.9,520.0 673.2,521.2 673.0,522.7 687.6,521.5Z" fill="#6a6a6a"/>
<path d="M643.0,520.3 628.3,518.2 628.5,519.8 643.1,521.8Z" fill="#555555"/>
<path d="M733.9,278.4 730.3,282.0 729.2,284.8 732.7,281.3Z" fill="#777777"/>
<path d="M623.7,278.8 620.1,275.0 621.3,277.9 624.8,281.6Z" fill="#161616"/>
<path d="M752.9,178.6 754.3,183.1 754.2,190.1 752.9,185.5Z" fill="#1c1c1c"/>
<path d="M614.3,178.9 615.6,174.5 615.6,181.3 614.2,185.9Z" fill="#7b7b7b"/>
<path d="M684.6,482.6 671.9,483.7 672.7,488.0 686.2,486.9Z" fill="#e0e0e0"/>
<path d="M646.0,482.9 633.3,481.1 631.8,485.3 645.2,487.2Z" fill="#d6d6d6"/>
<path d="M703.8,323.1 695.9,325.4 694.6,335.3 702.4,333.1Z" fill="#b1b1b1"/>
<path d="M649.3,324.0 641.4,321.2 640.7,331.2 648.5,334.0Z" fill="#6f6f6f"/>
<path d="M702.4,500.6 688.4,502.9 688.4,510.1 702.4,507.8Z" fill="#bcbcbc"/>
<path d="M628.8,501.1 614.8,497.9 614.4,505.2 628.4,508.3Z" fill="#919191"/>
<path d="M725.0,292.9 720.6,295.8 719.2,298.4 723.5,295.5Z" fill="#6c6c6c"/>
<path d="M633.4,293.2 629.0,290.0 630.5,292.7 634.8,295.8Z" fill="#171717"/>
<path d="M685.2,346.9 675.8,347.5 675.2,357.7 684.6,357.0Z" fill="#afafaf"/>
<path d="M666.2,347.2 656.8,346.1 656.2,356.2 665.6,357.4Z" fill="#989898"/>
<path d="M673.1,525.2 658.0,525.3 658.0,528.6 673.1,528.5Z" fill="#a8a8a8"/>
<path d="M658.0,525.3 642.9,524.3 642.8,527.6 658.0,528.6Z" fill="#a0a0a0"/>
<path d="M688.2,517.2 673.4,518.4 673.2,521.2 687.9,520.0Z" fill="#9d9d9d"/>
<path d="M643.0,517.5 628.2,515.4 628.3,518.2 643.0,520.3Z" fill="#838383"/>
<path d="M700.6,489.6 687.3,491.8 688.1,497.1 701.9,494.9Z" fill="#e4e4e4"/>
<path d="M630.5,490.0 617.1,487.1 615.6,492.3 629.4,495.4Z" fill="#c1c1c1"/>
<path d="M673.0,522.7 658.1,522.8 658.0,525.3 673.1,525.2Z" fill="#bdbdbd"/>
<path d="M658.1,522.8 643.1,521.8 642.9,524.3 658.0,525.3Z" fill="#b6b6b6"/>
<path d="M734.8,275.6 731.2,279.1 730.3,282.0 733.9,278.4Z" fill="#7f7f7f"/>
<path d="M622.8,275.9 619.2,272.1 620.1,275.0 623.7,278.8Z" fill="#1c1c1c"/>
<path d="M752.3,157.5 754.1,161.1 754.0,172.1 752.2,168.5Z" fill="#1e1e1e"/>
<path d="M694.6,335.3 685.8,336.8 685.2,346.9 694.0,345.4Z" fill="#b4b4b4"/>
<path d="M657.3,335.9 648.5,334.0 648.0,344.1 656.8,346.1Z" fill="#868686"/>
<path d="M726.8,261.2 724.3,263.8 730.7,265.2 733.5,262.2Z" fill="#c4c4c4"/>
<path d="M633.4,261.1 630.9,258.3 624.2,258.9 627.0,262.1Z" fill="#c4c4c4"/>
<path d="M701.9,494.9 688.1,497.1 688.4,502.9 702.4,500.6Z" fill="#d0d0d0"/>
<path d="M629.4,495.4 615.6,492.3 614.8,497.9 628.8,501.1Z" fill="#a7a7a7"/>
<path d="M673.2,521.2 658.1,521.3 658.1,522.8 673.0,522.7Z" fill="#656565"/>
<path d="M658.1,521.3 643.0,520.3 643.1,521.8 658.1,522.8Z" fill="#5d5d5d"/>
<path d="M675.8,347.5 666.2,347.2 665.6,357.4 675.2,357.7Z" fill="#a5a5a5"/>
<path d="M735.0,242.5 732.1,246.3 728.5,255.1 731.3,251.4Z" fill="#6b6b6b"/>
<path d="M636.0,243.4 633.0,239.5 633.2,248.5 636.1,252.3Z" fill="#171717"/>
<path d="M671.9,483.7 659.0,483.8 659.0,488.1 672.7,488.0Z" fill="#dddddd"/>
<path d="M659.0,483.8 646.0,482.9 645.2,487.2 659.0,488.1Z" fill="#dadada"/>
<path d="M752.3,157.5 754.1,161.1 768.0,161.1 765.9,156.8Z" fill="#c4c4c4"/>
<path d="M735.6,272.6 731.9,276.2 731.2,279.1 734.8,275.6Z" fill="#8a8a8a"/>
<path d="M622.3,272.9 618.6,269.1 619.2,272.1 622.8,275.9Z" fill="#252525"/>
<path d="M726.5,290.2 722.0,293.2 720.6,295.8 725.0,292.9Z" fill="#6c6c6c"/>
<path d="M632.0,290.5 627.5,287.2 629.0,290.0 633.4,293.2Z" fill="#171717"/>
<path d="M717.7,301.0 710.6,304.1 706.8,313.4 713.5,310.4Z" fill="#959595"/>
<path d="M642.9,302.1 635.9,298.5 635.9,308.1 642.6,311.5Z" fill="#444444"/>
<path d="M688.4,510.1 673.6,511.4 673.4,518.4 688.2,517.2Z" fill="#b0b0b0"/>
<path d="M643.2,510.4 628.4,508.3 628.2,515.4 643.0,517.5Z" fill="#969696"/>
<path d="M673.4,518.4 658.2,518.5 658.1,521.3 673.2,521.2Z" fill="#969696"/>
<path d="M658.2,518.5 643.0,517.5 643.0,520.3 658.1,521.3Z" fill="#8e8e8e"/>
<path d="M686.2,486.9 672.7,488.0 673.3,492.9 687.3,491.8Z" fill="#e5e5e5"/>
<path d="M645.2,487.2 631.8,485.3 630.5,490.0 644.5,492.0Z" fill="#d6d6d6"/>
<path d="M736.3,269.6 732.6,273.2 731.9,276.2 735.6,272.6Z" fill="#9a9a9a"/>
<path d="M622.4,269.9 618.7,266.1 618.6,269.1 622.3,272.9Z" fill="#333333"/>
<path d="M685.8,336.8 676.4,337.4 675.8,347.5 685.2,346.9Z" fill="#aeaeae"/>
<path d="M666.8,337.1 657.3,335.9 656.8,346.1 666.2,347.2Z" fill="#979797"/>
<path d="M706.8,313.4 698.7,315.7 695.9,325.4 703.8,323.1Z" fill="#a6a6a6"/>
<path d="M650.7,314.3 642.6,311.5 641.4,321.2 649.3,324.0Z" fill="#656565"/>
<path d="M728.0,287.5 723.3,290.6 722.0,293.2 726.5,290.2Z" fill="#6f6f6f"/>
<path d="M630.7,287.8 626.0,284.4 627.5,287.2 632.0,290.5Z" fill="#1a1a1a"/>
<path d="M736.2,267.6 732.5,271.1 732.6,273.2 736.3,269.6Z" fill="#b4b4b4"/>
<path d="M623.0,267.8 619.3,264.1 618.7,266.1 622.4,269.9Z" fill="#4e4e4e"/>
<path d="M733.1,262.8 729.6,266.1 731.5,268.8 735.1,265.3Z" fill="#dfdfdf"/>
<path d="M628.1,263.0 624.6,259.6 620.9,261.9 624.5,265.6Z" fill="#a4a4a4"/>
<path d="M735.1,265.3 731.5,268.8 732.5,271.1 736.2,267.6Z" fill="#d8d8d8"/>
<path d="M624.5,265.6 620.9,261.9 619.3,264.1 623.0,267.8Z" fill="#848484"/>
<path d="M695.9,325.4 687.0,326.8 685.8,336.8 694.6,335.3Z" fill="#afafaf"/>
<path d="M658.2,326.0 649.3,324.0 648.5,334.0 657.3,335.9Z" fill="#828282"/>
<path d="M688.4,502.9 673.7,504.1 673.6,511.4 688.4,510.1Z" fill="#b8b8b8"/>
<path d="M643.5,503.2 628.8,501.1 628.4,508.3 643.2,510.4Z" fill="#9d9d9d"/>
<path d="M719.2,298.4 713.9,300.9 712.6,303.4 717.7,301.0Z" fill="#747474"/>
<path d="M640.1,298.7 634.8,295.8 635.9,298.5 641.0,301.3Z" fill="#282828"/>
<path d="M676.4,337.4 666.8,337.1 666.2,347.2 675.8,347.5Z" fill="#a4a4a4"/>
<path d="M658.4,511.5 643.2,510.4 643.0,517.5 658.2,518.5Z" fill="#a1a1a1"/>
<path d="M673.6,511.4 658.4,511.5 658.2,518.5 673.4,518.4Z" fill="#a9a9a9"/>
<path d="M687.3,491.8 673.3,492.9 673.6,498.3 688.1,497.1Z" fill="#e1e1e1"/>
<path d="M644.5,492.0 630.5,490.0 629.4,495.4 643.9,497.4Z" fill="#cccccc"/>
<path d="M672.7,488.0 659.0,488.1 658.9,493.0 673.3,492.9Z" fill="#e2e2e2"/>
<path d="M659.0,488.1 645.2,487.2 644.5,492.0 658.9,493.0Z" fill="#dcdcdc"/>
<path d="M688.1,497.1 673.6,498.3 673.7,504.1 688.4,502.9Z" fill="#cccccc"/>
<path d="M643.9,497.4 629.4,495.4 628.8,501.1 643.5,503.2Z" fill="#b3b3b3"/>
<path d="M729.2,284.8 724.4,287.9 723.3,290.6 728.0,287.5Z" fill="#777777"/>
<path d="M629.6,285.1 624.8,281.6 626.0,284.4 630.7,287.8Z" fill="#1f1f1f"/>
<path d="M716.2,197.5 714.6,200.9 704.2,199.9 705.2,197.6Z" fill="#c0c0c0"/>
<path d="M653.8,199.0 652.2,195.5 663.2,196.4 664.2,198.7Z" fill="#c6c6c6"/>
<path d="M720.6,295.8 715.1,298.4 713.9,300.9 719.2,298.4Z" fill="#717171"/>
<path d="M638.9,296.1 633.4,293.2 634.8,295.8 640.1,298.7Z" fill="#252525"/>
<path d="M768.2,203.5 766.6,209.3 766.0,219.4 767.6,213.5Z" fill="#8c8c8c"/>
<path d="M601.8,204.3 600.2,198.5 600.6,208.5 602.2,214.5Z" fill="#0f0f0f"/>
<path d="M673.7,504.1 658.6,504.2 658.4,511.5 673.6,511.4Z" fill="#b1b1b1"/>
<path d="M658.6,504.2 643.5,503.2 643.2,510.4 658.4,511.5Z" fill="#a8a8a8"/>
<path d="M728.5,255.1 723.9,258.4 720.4,266.6 725.1,263.2Z" fill="#888888"/>
<path d="M640.7,255.9 636.1,252.3 632.7,260.4 637.3,264.1Z" fill="#393939"/>
<path d="M673.3,492.9 658.9,493.0 658.8,498.4 673.6,498.3Z" fill="#dcdcdc"/>
<path d="M658.9,493.0 644.5,492.0 643.9,497.4 658.8,498.4Z" fill="#d4d4d4"/>
<path d="M730.3,282.0 725.4,285.2 724.4,287.9 729.2,284.8Z" fill="#7e7e7e"/>
<path d="M628.6,282.3 623.7,278.8 624.8,281.6 629.6,285.1Z" fill="#252525"/>
<path d="M687.0,326.8 677.5,327.4 676.4,337.4 685.8,336.8Z" fill="#aaaaaa"/>
<path d="M667.8,327.2 658.2,326.0 657.3,335.9 666.8,337.1Z" fill="#929292"/>
<path d="M614.5,171.5 614.7,167.5 614.7,176.5 614.4,180.5Z" fill="#686868"/>
<path d="M724.3,263.8 720.9,266.3 726.8,268.0 730.7,265.2Z" fill="#c4c4c4"/>
<path d="M636.8,263.8 633.4,261.1 627.0,262.1 630.9,265.1Z" fill="#c4c4c4"/>
<path d="M727.2,197.3 725.1,201.9 714.6,200.9 716.2,197.5Z" fill="#c0c0c0"/>
<path d="M643.3,199.4 641.2,194.7 652.2,195.5 653.8,199.0Z" fill="#c6c6c6"/>
<path d="M673.6,498.3 658.8,498.4 658.6,504.2 673.7,504.1Z" fill="#c5c5c5"/>
<path d="M658.8,498.4 643.9,497.4 643.5,503.2 658.6,504.2Z" fill="#bdbdbd"/>
<path d="M754.0,172.1 754.1,175.7 754.1,184.7 754.0,181.1Z" fill="#131313"/>
<path d="M677.5,327.4 667.8,327.2 666.8,337.1 676.4,337.4Z" fill="#a0a0a0"/>
<path d="M698.7,315.7 689.5,317.2 687.0,326.8 695.9,325.4Z" fill="#a5a5a5"/>
<path d="M659.9,316.4 650.7,314.3 649.3,324.0 658.2,326.0Z" fill="#787878"/>
<path d="M710.6,304.1 702.1,306.5 698.7,315.7 706.8,313.4Z" fill="#989898"/>
<path d="M651.5,305.0 642.9,302.1 642.6,311.5 650.7,314.3Z" fill="#585858"/>
<path d="M722.0,293.2 716.3,295.8 715.1,298.4 720.6,295.8Z" fill="#717171"/>
<path d="M637.7,293.5 632.0,290.5 633.4,293.2 638.9,296.1Z" fill="#252525"/>
<path d="M731.2,279.1 726.2,282.4 725.4,285.2 730.3,282.0Z" fill="#868686"/>
<path d="M627.8,279.4 622.8,275.9 623.7,278.8 628.6,282.3Z" fill="#2b2b2b"/>
<path d="M738.2,196.6 735.6,202.3 725.1,201.9 727.2,197.3Z" fill="#bdbdbd"/>
<path d="M632.9,199.2 630.2,193.4 641.2,194.7 643.3,199.4Z" fill="#c7c7c7"/>
<path d="M768.2,193.5 766.6,199.1 766.6,209.3 768.2,203.5Z" fill="#919191"/>
<path d="M601.8,194.1 600.2,188.5 600.2,198.5 601.8,204.3Z" fill="#0f0f0f"/>
<path d="M713.9,300.9 707.7,303.0 706.5,305.4 712.6,303.4Z" fill="#777777"/>
<path d="M646.3,301.1 640.1,298.7 641.0,301.3 647.0,303.7Z" fill="#363636"/>
<path d="M732.1,246.3 727.3,249.7 723.9,258.4 728.5,255.1Z" fill="#747474"/>
<path d="M640.8,247.1 636.0,243.4 636.1,252.3 640.7,255.9Z" fill="#262626"/>
<path d="M754.2,190.1 752.9,194.7 748.9,200.4 750.2,196.0Z" fill="#4b4b4b"/>
<path d="M615.6,190.5 614.2,185.9 618.2,192.0 619.5,196.5Z" fill="#9b9b9b"/>
<path d="M731.9,276.2 726.9,279.5 726.2,282.4 731.2,279.1Z" fill="#929292"/>
<path d="M627.4,276.5 622.3,272.9 622.8,275.9 627.8,279.4Z" fill="#353535"/>
<path d="M614.5,160.5 614.7,156.5 614.7,167.5 614.5,171.5Z" fill="#686868"/>
<path d="M723.3,290.6 717.4,293.3 716.3,295.8 722.0,293.2Z" fill="#747474"/>
<path d="M636.6,290.9 630.7,287.8 632.0,290.5 637.7,293.5Z" fill="#282828"/>
<path d="M754.1,161.1 754.2,164.7 754.1,175.7 754.0,172.1Z" fill="#131313"/>
<path d="M732.6,273.2 727.5,276.5 726.9,279.5 731.9,276.2Z" fill="#a2a2a2"/>
<path d="M627.5,273.5 622.4,269.9 622.3,272.9 627.4,276.5Z" fill="#424242"/>
<path d="M689.5,317.2 679.7,317.9 677.5,327.4 687.0,326.8Z" fill="#9f9f9f"/>
<path d="M669.7,317.6 659.9,316.4 658.2,326.0 667.8,327.2Z" fill="#888888"/>
<path d="M750.2,196.0 747.0,202.9 735.6,202.3 738.2,196.6Z" fill="#bdbdbd"/>
<path d="M621.4,199.2 618.2,192.0 630.2,193.4 632.9,199.2Z" fill="#c7c7c7"/>
<path d="M729.6,266.1 725.0,269.1 726.5,271.9 731.5,268.8Z" fill="#e4e4e4"/>
<path d="M632.7,266.3 628.1,263.0 624.5,265.6 629.5,269.0Z" fill="#adadad"/>
<path d="M732.5,271.1 727.5,274.4 727.5,276.5 732.6,273.2Z" fill="#bcbcbc"/>
<path d="M628.0,271.4 623.0,267.8 622.4,269.9 627.5,273.5Z" fill="#5d5d5d"/>
<path d="M715.1,298.4 708.7,300.5 707.7,303.0 713.9,300.9Z" fill="#737373"/>
<path d="M645.3,298.6 638.9,296.1 640.1,298.7 646.3,301.1Z" fill="#333333"/>
<path d="M614.5,160.5 614.7,156.5 600.8,155.6 600.6,160.4Z" fill="#c4c4c4"/>
<path d="M679.7,317.9 669.7,317.6 667.8,327.2 677.5,327.4Z" fill="#959595"/>
<path d="M731.5,268.8 726.5,271.9 727.5,274.4 732.5,271.1Z" fill="#dedede"/>
<path d="M629.5,269.0 624.5,265.6 623.0,267.8 628.0,271.4Z" fill="#909090"/>
<path d="M724.4,287.9 718.4,290.7 717.4,293.3 723.3,290.6Z" fill="#7c7c7c"/>
<path d="M635.6,288.2 629.6,285.1 630.7,287.8 636.6,290.9Z" fill="#2e2e2e"/>
<path d="M754.1,161.1 754.2,164.7 768.2,165.4 768.0,161.1Z" fill="#c4c4c4"/>
<path d="M768.3,183.5 766.7,188.8 766.6,199.1 768.2,193.5Z" fill="#919191"/>
<path d="M601.9,183.9 600.3,178.5 600.2,188.5 601.8,194.1Z" fill="#0f0f0f"/>
<path d="M714.6,200.9 710.1,203.8 701.2,201.8 704.2,199.9Z" fill="#bfbfbf"/>
<path d="M658.3,202.3 653.8,199.0 664.2,198.7 667.2,200.8Z" fill="#c4c4c4"/>
<path d="M702.1,306.5 692.4,308.1 689.5,317.2 698.7,315.7Z" fill="#979797"/>
<path d="M661.2,307.2 651.5,305.0 650.7,314.3 659.9,316.4Z" fill="#6a6a6a"/>
<path d="M754.1,174.7 761.1,175.1 761.1,185.1 754.1,184.7Z" fill="#818181"/>
<path d="M720.9,266.3 716.6,268.5 721.9,270.5 726.8,268.0Z" fill="#c4c4c4"/>
<path d="M641.1,266.2 636.8,263.8 630.9,265.1 635.8,268.0Z" fill="#c4c4c4"/>
<path d="M761.1,175.1 768.1,175.4 768.1,185.4 761.1,185.1Z" fill="#818181"/>
<path d="M725.4,285.2 719.3,288.0 718.4,290.7 724.4,287.9Z" fill="#838383"/>
<path d="M634.7,285.4 628.6,282.3 629.6,285.1 635.6,288.2Z" fill="#343434"/>
<path d="M716.3,295.8 709.7,298.1 708.7,300.5 715.1,298.4Z" fill="#737373"/>
<path d="M644.3,296.1 637.7,293.5 638.9,296.1 645.3,298.6Z" fill="#333333"/>
<path d="M707.7,303.0 700.7,304.6 699.8,307.0 706.5,305.4Z" fill="#787878"/>
<path d="M653.3,303.2 646.3,301.1 647.0,303.7 653.8,305.6Z" fill="#434343"/>
<path d="M723.9,258.4 717.6,261.3 714.2,269.5 720.4,266.6Z" fill="#8e8e8e"/>
<path d="M646.9,259.2 640.7,255.9 637.3,264.1 643.5,267.4Z" fill="#494949"/>
<path d="M763.5,228.4 758.9,234.0 754.3,240.3 758.6,234.9Z" fill="#525252"/>
<path d="M609.3,229.5 604.7,223.6 609.5,230.5 613.9,236.1Z" fill="#0f0f0f"/>
<path d="M726.2,282.4 720.0,285.2 719.3,288.0 725.4,285.2Z" fill="#8b8b8b"/>
<path d="M634.0,282.6 627.8,279.4 628.6,282.3 634.7,285.4Z" fill="#3a3a3a"/>
<path d="M692.4,308.1 682.1,308.7 679.7,317.9 689.5,317.2Z" fill="#919191"/>
<path d="M671.5,308.4 661.2,307.2 659.9,316.4 669.7,317.6Z" fill="#7a7a7a"/>
<path d="M717.4,293.3 710.6,295.5 709.7,298.1 716.3,295.8Z" fill="#777777"/>
<path d="M643.4,293.5 636.6,290.9 637.7,293.5 644.3,296.1Z" fill="#363636"/>
<path d="M754.2,164.7 761.2,165.1 761.1,175.1 754.1,174.7Z" fill="#818181"/>
<path d="M708.7,300.5 701.5,302.2 700.7,304.6 707.7,303.0Z" fill="#747474"/>
<path d="M652.5,300.7 645.3,298.6 646.3,301.1 653.3,303.2Z" fill="#404040"/>
<path d="M761.2,165.1 768.2,165.4 768.1,175.4 761.1,175.1Z" fill="#818181"/>
<path d="M726.9,279.5 720.6,282.3 720.0,285.2 726.2,282.4Z" fill="#979797"/>
<path d="M633.6,279.7 627.4,276.5 627.8,279.4 634.0,282.6Z" fill="#444444"/>
<path d="M682.1,308.7 671.5,308.4 669.7,317.6 679.7,317.9Z" fill="#878787"/>
<path d="M727.3,249.7 720.8,252.6 717.6,261.3 723.9,258.4Z" fill="#7a7a7a"/>
<path d="M647.3,250.4 640.8,247.1 640.7,255.9 646.9,259.2Z" fill="#363636"/>
<path d="M700.7,304.6 693.1,305.7 692.4,308.1 699.8,307.0Z" fill="#767676"/>
<path d="M660.9,304.7 653.3,303.2 653.8,305.6 661.2,307.2Z" fill="#505050"/>
<path d="M725.1,201.9 719.0,205.8 710.1,203.8 714.6,200.9Z" fill="#bfbfbf"/>
<path d="M649.4,203.8 643.3,199.4 653.8,199.0 658.3,202.3Z" fill="#c4c4c4"/>
<path d="M754.1,184.7 752.3,188.4 765.9,189.9 768.1,185.4Z" fill="#c4c4c4"/>
<path d="M766.0,219.4 761.3,225.1 758.9,234.0 763.5,228.4Z" fill="#7f7f7f"/>
<path d="M607.0,220.4 602.2,214.5 604.7,223.6 609.3,229.5Z" fill="#0f0f0f"/>
<path d="M718.4,290.7 711.4,293.0 710.6,295.5 717.4,293.3Z" fill="#7f7f7f"/>
<path d="M642.6,290.9 635.6,288.2 636.6,290.9 643.4,293.5Z" fill="#3c3c3c"/>
<path d="M727.5,276.5 721.2,279.3 720.6,282.3 726.9,279.5Z" fill="#a7a7a7"/>
<path d="M633.8,276.7 627.5,273.5 627.4,276.5 633.6,279.7Z" fill="#525252"/>
<path d="M725.0,269.1 719.2,271.7 720.4,274.7 726.5,271.9Z" fill="#e5e5e5"/>
<path d="M638.6,269.2 632.7,266.3 629.5,269.0 635.6,272.1Z" fill="#b6b6b6"/>
<path d="M716.6,268.5 711.6,270.4 716.2,272.7 721.9,270.5Z" fill="#c4c4c4"/>
<path d="M646.1,268.4 641.1,266.2 635.8,268.0 641.5,270.5Z" fill="#c4c4c4"/>
<path d="M709.7,298.1 702.2,299.8 701.5,302.2 708.7,300.5Z" fill="#747474"/>
<path d="M651.8,298.2 644.3,296.1 645.3,298.6 652.5,300.7Z" fill="#404040"/>
<path d="M710.1,203.8 703.0,206.1 696.5,203.3 701.2,201.8Z" fill="#bfbfbf"/>
<path d="M665.4,205.0 658.3,202.3 667.2,200.8 671.9,202.6Z" fill="#c3c3c3"/>
<path d="M727.5,274.4 721.2,277.2 721.2,279.3 727.5,276.5Z" fill="#c2c2c2"/>
<path d="M634.3,274.6 628.0,271.4 627.5,273.5 633.8,276.7Z" fill="#6d6d6d"/>
<path d="M726.5,271.9 720.4,274.7 721.2,277.2 727.5,274.4Z" fill="#e3e3e3"/>
<path d="M635.6,272.1 629.5,269.0 628.0,271.4 634.3,274.6Z" fill="#9d9d9d"/>
<path d="M693.1,305.7 685.2,306.3 684.7,308.7 692.4,308.1Z" fill="#727272"/>
<path d="M668.8,305.8 660.9,304.7 661.2,307.2 668.9,308.2Z" fill="#5b5b5b"/>
<path d="M701.5,302.2 693.7,303.3 693.1,305.7 700.7,304.6Z" fill="#727272"/>
<path d="M660.3,302.3 652.5,300.7 653.3,303.2 660.9,304.7Z" fill="#4c4c4c"/>
<path d="M719.3,288.0 712.1,290.3 711.4,293.0 718.4,290.7Z" fill="#868686"/>
<path d="M641.9,288.2 634.7,285.4 635.6,288.2 642.6,290.9Z" fill="#424242"/>
<path d="M602.8,176.2 600.5,171.4 600.5,180.4 602.8,185.2Z" fill="#0f0f0f"/>
<path d="M717.6,261.3 710.1,263.6 706.6,271.8 714.2,269.5Z" fill="#919191"/>
<path d="M654.5,261.9 646.9,259.2 643.5,267.4 651.1,270.1Z" fill="#585858"/>
<path d="M710.6,295.5 703.0,297.3 702.2,299.8 709.7,298.1Z" fill="#787878"/>
<path d="M651.0,295.7 643.4,293.5 644.3,296.1 651.8,298.2Z" fill="#434343"/>
<path d="M685.2,306.3 677.0,306.3 676.8,308.7 684.7,308.7Z" fill="#6c6c6c"/>
<path d="M677.0,306.3 668.8,305.8 668.9,308.2 676.8,308.7Z" fill="#646464"/>
<path d="M766.6,209.3 761.8,214.7 761.3,225.1 766.0,219.4Z" fill="#9a9a9a"/>
<path d="M606.6,210.1 601.8,204.3 602.2,214.5 607.0,220.4Z" fill="#0f0f0f"/>
<path d="M720.0,285.2 712.7,287.6 712.1,290.3 719.3,288.0Z" fill="#8e8e8e"/>
<path d="M641.3,285.4 634.0,282.6 634.7,285.4 641.9,288.2Z" fill="#494949"/>
<path d="M693.7,303.3 685.4,303.9 685.2,306.3 693.1,305.7Z" fill="#6e6e6e"/>
<path d="M668.6,303.4 660.3,302.3 660.9,304.7 668.8,305.8Z" fill="#575757"/>
<path d="M702.2,299.8 694.2,300.9 693.7,303.3 701.5,302.2Z" fill="#727272"/>
<path d="M659.8,299.9 651.8,298.2 652.5,300.7 660.3,302.3Z" fill="#4c4c4c"/>
<path d="M735.6,202.3 727.9,207.3 719.0,205.8 725.1,201.9Z" fill="#bbbbbb"/>
<path d="M640.5,204.7 632.9,199.2 643.3,199.4 649.4,203.8Z" fill="#c4c4c4"/>
<path d="M711.4,293.0 703.6,294.7 703.0,297.3 710.6,295.5Z" fill="#7f7f7f"/>
<path d="M650.4,293.2 642.6,290.9 643.4,293.5 651.0,295.7Z" fill="#494949"/>
<path d="M711.6,270.4 705.9,272.0 709.7,274.5 716.2,272.7Z" fill="#c4c4c4"/>
<path d="M651.8,270.4 646.1,268.4 641.5,270.5 648.0,272.7Z" fill="#c4c4c4"/>
<path d="M720.6,282.3 713.3,284.7 712.7,287.6 720.0,285.2Z" fill="#9a9a9a"/>
<path d="M641.0,282.5 633.6,279.7 634.0,282.6 641.3,285.4Z" fill="#535353"/>
<path d="M685.4,303.9 677.0,303.9 677.0,306.3 685.2,306.3Z" fill="#696969"/>
<path d="M677.0,303.9 668.6,303.4 668.8,305.8 677.0,306.3Z" fill="#616161"/>
<path d="M703.0,206.1 694.1,207.4 690.7,204.2 696.5,203.3Z" fill="#bfbfbf"/>
<path d="M674.3,206.8 665.4,205.0 671.9,202.6 677.7,203.8Z" fill="#c1c1c1"/>
<path d="M602.9,165.2 600.6,160.4 600.5,171.4 602.8,176.2Z" fill="#0f0f0f"/>
<path d="M720.8,252.6 712.9,254.9 710.1,263.6 717.6,261.3Z" fill="#7d7d7d"/>
<path d="M655.1,253.2 647.3,250.4 646.9,259.2 654.5,261.9Z" fill="#454545"/>
<path d="M616.4,164.5 614.5,160.5 600.6,160.4 602.9,165.2Z" fill="#c4c4c4"/>
<path d="M719.2,271.7 712.4,273.8 713.3,277.0 720.4,274.7Z" fill="#e5e5e5"/>
<path d="M645.4,271.8 638.6,269.2 635.6,272.1 642.7,274.8Z" fill="#bfbfbf"/>
<path d="M766.6,199.1 761.8,204.3 761.8,214.7 766.6,209.3Z" fill="#9f9f9f"/>
<path d="M606.6,199.6 601.8,194.1 601.8,204.3 606.6,210.1Z" fill="#0f0f0f"/>
<path d="M721.2,279.3 713.8,281.7 713.3,284.7 720.6,282.3Z" fill="#aaaaaa"/>
<path d="M641.2,279.5 633.8,276.7 633.6,279.7 641.0,282.5Z" fill="#626262"/>
<path d="M703.0,297.3 694.7,298.5 694.2,300.9 702.2,299.8Z" fill="#767676"/>
<path d="M659.3,297.4 651.0,295.7 651.8,298.2 659.8,299.9Z" fill="#505050"/>
<path d="M694.2,300.9 685.7,301.5 685.4,303.9 693.7,303.3Z" fill="#6e6e6e"/>
<path d="M668.3,301.0 659.8,299.9 660.3,302.3 668.6,303.4Z" fill="#575757"/>
<path d="M712.1,290.3 704.1,292.1 703.6,294.7 711.4,293.0Z" fill="#878787"/>
<path d="M649.9,290.5 641.9,288.2 642.6,290.9 650.4,293.2Z" fill="#505050"/>
<path d="M721.2,277.2 713.9,279.5 713.8,281.7 721.2,279.3Z" fill="#c5c5c5"/>
<path d="M641.6,277.4 634.3,274.6 633.8,276.7 641.2,279.5Z" fill="#7d7d7d"/>
<path d="M720.4,274.7 713.3,277.0 713.9,279.5 721.2,277.2Z" fill="#e5e5e5"/>
<path d="M642.7,274.8 635.6,272.1 634.3,274.6 641.6,277.4Z" fill="#aaaaaa"/>
<path d="M710.1,263.6 701.4,265.2 698.0,273.4 706.6,271.8Z" fill="#919191"/>
<path d="M663.2,264.0 654.5,261.9 651.1,270.1 659.7,272.3Z" fill="#676767"/>
<path d="M694.1,207.4 684.2,207.7 684.2,204.3 690.7,204.2Z" fill="#bfbfbf"/>
<path d="M684.2,207.7 674.3,206.8 677.7,203.8 684.2,204.3Z" fill="#c0c0c0"/>
<path d="M685.7,301.5 677.0,301.6 677.0,303.9 685.4,303.9Z" fill="#696969"/>
<path d="M677.0,301.6 668.3,301.0 668.6,303.4 677.0,303.9Z" fill="#616161"/>
<path d="M719.0,205.8 709.5,208.9 703.0,206.1 710.1,203.8Z" fill="#bfbfbf"/>
<path d="M658.9,207.3 649.4,203.8 658.3,202.3 665.4,205.0Z" fill="#c3c3c3"/>
<path d="M712.7,287.6 704.6,289.4 704.1,292.1 712.1,290.3Z" fill="#8f8f8f"/>
<path d="M649.4,287.7 641.3,285.4 641.9,288.2 649.9,290.5Z" fill="#575757"/>
<path d="M703.6,294.7 695.1,296.0 694.7,298.5 703.0,297.3Z" fill="#7d7d7d"/>
<path d="M658.9,294.9 650.4,293.2 651.0,295.7 659.3,297.4Z" fill="#565656"/>
<path d="M705.9,272.0 699.6,273.2 702.5,275.9 709.7,274.5Z" fill="#c4c4c4"/>
<path d="M658.1,271.9 651.8,270.4 648.0,272.7 655.2,274.5Z" fill="#c4c4c4"/>
<path d="M694.7,298.5 685.9,299.1 685.7,301.5 694.2,300.9Z" fill="#727272"/>
<path d="M668.1,298.6 659.3,297.4 659.8,299.9 668.3,301.0Z" fill="#5b5b5b"/>
<path d="M758.9,234.0 751.4,239.0 747.3,245.2 754.3,240.3Z" fill="#5b5b5b"/>
<path d="M616.7,235.0 609.3,229.5 613.9,236.1 620.9,241.4Z" fill="#0f0f0f"/>
<path d="M747.0,202.9 737.6,209.0 727.9,207.3 735.6,202.3Z" fill="#bcbcbc"/>
<path d="M630.8,205.8 621.4,199.2 632.9,199.2 640.5,204.7Z" fill="#c4c4c4"/>
<path d="M766.7,188.8 761.9,193.8 761.8,204.3 766.6,199.1Z" fill="#9f9f9f"/>
<path d="M606.7,189.1 601.9,183.9 601.8,194.1 606.6,199.6Z" fill="#0f0f0f"/>
<path d="M685.9,299.1 677.0,299.2 677.0,301.6 685.7,301.5Z" fill="#6c6c6c"/>
<path d="M677.0,299.2 668.1,298.6 668.3,301.0 677.0,301.6Z" fill="#646464"/>
<path d="M713.3,284.7 705.0,286.6 704.6,289.4 712.7,287.6Z" fill="#9b9b9b"/>
<path d="M649.2,284.9 641.0,282.5 641.3,285.4 649.4,287.7Z" fill="#626262"/>
<path d="M704.1,292.1 695.5,293.4 695.1,296.0 703.6,294.7Z" fill="#858585"/>
<path d="M658.5,292.3 649.9,290.5 650.4,293.2 658.9,294.9Z" fill="#5d5d5d"/>
<path d="M701.4,265.2 692.0,266.0 688.6,274.3 698.0,273.4Z" fill="#8e8e8e"/>
<path d="M672.5,265.4 663.2,264.0 659.7,272.3 669.1,273.7Z" fill="#747474"/>
<path d="M712.9,254.9 703.9,256.5 701.4,265.2 710.1,263.6Z" fill="#7d7d7d"/>
<path d="M664.1,255.4 655.1,253.2 654.5,261.9 663.2,264.0Z" fill="#535353"/>
<path d="M752.3,188.4 748.5,191.9 761.4,194.1 765.9,189.9Z" fill="#c4c4c4"/>
<path d="M712.4,273.8 704.7,275.5 705.2,278.7 713.3,277.0Z" fill="#e5e5e5"/>
<path d="M653.0,274.0 645.4,271.8 642.7,274.8 650.8,277.1Z" fill="#c7c7c7"/>
<path d="M695.1,296.0 686.2,296.6 685.9,299.1 694.7,298.5Z" fill="#797979"/>
<path d="M667.8,296.1 658.9,294.9 659.3,297.4 668.1,298.6Z" fill="#626262"/>
<path d="M713.8,281.7 705.6,283.6 705.0,286.6 713.3,284.7Z" fill="#ababab"/>
<path d="M649.4,281.9 641.2,279.5 641.0,282.5 649.2,284.9Z" fill="#717171"/>
<path d="M699.6,273.2 692.9,274.0 694.9,276.8 702.5,275.9Z" fill="#c4c4c4"/>
<path d="M664.8,273.2 658.1,271.9 655.2,274.5 662.8,275.9Z" fill="#c4c4c4"/>
<path d="M713.3,277.0 705.2,278.7 705.7,281.4 713.9,279.5Z" fill="#e5e5e5"/>
<path d="M650.8,277.1 642.7,274.8 641.6,277.4 649.8,279.7Z" fill="#b6b6b6"/>
<path d="M713.9,279.5 705.7,281.4 705.6,283.6 713.8,281.7Z" fill="#c5c5c5"/>
<path d="M649.8,279.7 641.6,277.4 641.2,279.5 649.4,281.9Z" fill="#8b8b8b"/>
<path d="M686.2,296.6 677.0,296.6 677.0,299.2 685.9,299.1Z" fill="#737373"/>
<path d="M677.0,296.6 667.8,296.1 668.1,298.6 677.0,299.2Z" fill="#6b6b6b"/>
<path d="M692.0,266.0 682.3,266.1 678.9,274.4 688.6,274.3Z" fill="#888888"/>
<path d="M682.3,266.1 672.5,265.4 669.1,273.7 678.9,274.4Z" fill="#7f7f7f"/>
<path d="M704.6,289.4 695.8,290.7 695.5,293.4 704.1,292.1Z" fill="#8d8d8d"/>
<path d="M658.2,289.5 649.4,287.7 649.9,290.5 658.5,292.3Z" fill="#646464"/>
<path d="M695.5,293.4 686.4,294.0 686.2,296.6 695.1,296.0Z" fill="#818181"/>
<path d="M667.6,293.4 658.5,292.3 658.9,294.9 667.8,296.1Z" fill="#696969"/>
<path d="M761.3,225.1 753.6,230.1 751.4,239.0 758.9,234.0Z" fill="#8a8a8a"/>
<path d="M614.7,226.0 607.0,220.4 609.3,229.5 616.7,235.0Z" fill="#0f0f0f"/>
<path d="M692.9,274.0 686.0,274.4 687.0,277.3 694.9,276.8Z" fill="#c4c4c4"/>
<path d="M671.7,274.0 664.8,273.2 662.8,275.9 670.7,276.8Z" fill="#c4c4c4"/>
<path d="M705.0,286.6 696.1,287.8 695.8,290.7 704.6,289.4Z" fill="#999999"/>
<path d="M658.1,286.7 649.2,284.9 649.4,287.7 658.2,289.5Z" fill="#6f6f6f"/>
<path d="M709.5,208.9 697.5,210.6 694.1,207.4 703.0,206.1Z" fill="#bfbfbf"/>
<path d="M670.9,209.8 658.9,207.3 665.4,205.0 674.3,206.8Z" fill="#c1c1c1"/>
<path d="M703.9,256.5 694.2,257.4 692.0,266.0 701.4,265.2Z" fill="#7a7a7a"/>
<path d="M673.9,256.8 664.1,255.4 663.2,264.0 672.5,265.4Z" fill="#606060"/>
<path d="M686.4,294.0 677.0,294.0 677.0,296.6 686.2,296.6Z" fill="#7b7b7b"/>
<path d="M677.0,294.0 667.6,293.4 667.8,296.1 677.0,296.6Z" fill="#737373"/>
<path d="M686.0,274.4 678.9,274.4 678.9,277.3 687.0,277.3Z" fill="#c4c4c4"/>
<path d="M678.9,274.4 671.7,274.0 670.7,276.8 678.9,277.3Z" fill="#c4c4c4"/>
<path d="M704.7,275.5 696.5,276.7 696.5,279.9 705.2,278.7Z" fill="#e5e5e5"/>
<path d="M661.2,275.6 653.0,274.0 650.8,277.1 659.5,278.8Z" fill="#cfcfcf"/>
<path d="M607.6,180.8 602.8,176.2 602.8,185.2 607.5,189.8Z" fill="#0f0f0f"/>
<path d="M695.8,290.7 686.5,291.3 686.4,294.0 695.5,293.4Z" fill="#898989"/>
<path d="M667.5,290.7 658.2,289.5 658.5,292.3 667.6,293.4Z" fill="#707070"/>
<path d="M727.9,207.3 716.0,211.1 709.5,208.9 719.0,205.8Z" fill="#bababa"/>
<path d="M652.5,209.2 640.5,204.7 649.4,203.8 658.9,207.3Z" fill="#c1c1c1"/>
<path d="M705.6,283.6 696.6,284.8 696.1,287.8 705.0,286.6Z" fill="#a9a9a9"/>
<path d="M658.4,283.7 649.4,281.9 649.2,284.9 658.1,286.7Z" fill="#7e7e7e"/>
<path d="M694.2,257.4 684.0,257.5 682.3,266.1 692.0,266.0Z" fill="#747474"/>
<path d="M684.0,257.5 673.9,256.8 672.5,265.4 682.3,266.1Z" fill="#6b6b6b"/>
<path d="M705.2,278.7 696.5,279.9 696.8,282.6 705.7,281.4Z" fill="#e4e4e4"/>
<path d="M659.5,278.8 650.8,277.1 649.8,279.7 658.7,281.5Z" fill="#c1c1c1"/>
<path d="M705.7,281.4 696.8,282.6 696.6,284.8 705.6,283.6Z" fill="#c3c3c3"/>
<path d="M658.7,281.5 649.8,279.7 649.4,281.9 658.4,283.7Z" fill="#999999"/>
<path d="M686.5,291.3 677.0,291.3 677.0,294.0 686.4,294.0Z" fill="#838383"/>
<path d="M677.0,291.3 667.5,290.7 667.6,293.4 677.0,294.0Z" fill="#7a7a7a"/>
<path d="M696.1,287.8 686.7,288.5 686.5,291.3 695.8,290.7Z" fill="#959595"/>
<path d="M667.5,287.9 658.1,286.7 658.2,289.5 667.5,290.7Z" fill="#7b7b7b"/>
<path d="M761.8,214.7 754.0,219.7 753.6,230.1 761.3,225.1Z" fill="#a5a5a5"/>
<path d="M614.3,215.5 606.6,210.1 607.0,220.4 614.7,226.0Z" fill="#161616"/>
<path d="M696.5,276.7 687.8,277.3 687.4,280.6 696.5,279.9Z" fill="#e5e5e5"/>
<path d="M669.9,276.7 661.2,275.6 659.5,278.8 668.6,280.0Z" fill="#d6d6d6"/>
<path d="M697.5,210.6 684.2,211.0 684.2,207.7 694.1,207.4Z" fill="#bfbfbf"/>
<path d="M684.2,211.0 670.9,209.8 674.3,206.8 684.2,207.7Z" fill="#c0c0c0"/>
<path d="M620.4,178.3 614.0,179.1 613.9,189.1 620.3,188.3Z" fill="#919191"/>
<path d="M620.4,168.3 616.4,164.5 602.9,165.2 607.6,169.8Z" fill="#c4c4c4"/>
<path d="M686.7,288.5 677.1,288.5 677.0,291.3 686.5,291.3Z" fill="#8f8f8f"/>
<path d="M677.1,288.5 667.5,287.9 667.5,290.7 677.0,291.3Z" fill="#868686"/>
<path d="M696.6,284.8 687.2,285.5 686.7,288.5 696.1,287.8Z" fill="#a5a5a5"/>
<path d="M667.8,284.9 658.4,283.7 658.1,286.7 667.5,287.9Z" fill="#8b8b8b"/>
<path d="M607.6,169.8 602.9,165.2 602.8,176.2 607.6,180.8Z" fill="#0f0f0f"/>
<path d="M687.8,277.3 678.9,277.3 678.0,280.6 687.4,280.6Z" fill="#e2e2e2"/>
<path d="M678.9,277.3 669.9,276.7 668.6,280.0 678.0,280.6Z" fill="#dddddd"/>
<path d="M696.5,279.9 687.4,280.6 687.4,283.3 696.8,282.6Z" fill="#e1e1e1"/>
<path d="M668.6,280.0 659.5,278.8 658.7,281.5 668.1,282.7Z" fill="#cccccc"/>
<path d="M696.8,282.6 687.4,283.3 687.2,285.5 696.6,284.8Z" fill="#bfbfbf"/>
<path d="M668.1,282.7 658.7,281.5 658.4,283.7 667.8,284.9Z" fill="#a5a5a5"/>
<path d="M687.2,285.5 677.5,285.5 677.1,288.5 686.7,288.5Z" fill="#9e9e9e"/>
<path d="M677.5,285.5 667.8,284.9 667.5,287.9 677.1,288.5Z" fill="#959595"/>
<path d="M761.8,204.3 754.1,209.0 754.0,219.7 761.8,214.7Z" fill="#aaaaaa"/>
<path d="M614.4,204.8 606.6,199.6 606.6,210.1 614.3,215.5Z" fill="#1c1c1c"/>
<path d="M687.4,280.6 678.0,280.6 677.8,283.3 687.4,283.3Z" fill="#dcdcdc"/>
<path d="M678.0,280.6 668.6,280.0 668.1,282.7 677.8,283.3Z" fill="#d4d4d4"/>
<path d="M614.0,179.1 607.6,179.8 607.5,189.8 613.9,189.1Z" fill="#919191"/>
<path d="M687.4,283.3 677.8,283.3 677.5,285.5 687.2,285.5Z" fill="#b9b9b9"/>
<path d="M677.8,283.3 668.1,282.7 667.8,284.9 677.5,285.5Z" fill="#b0b0b0"/>
<path d="M626.8,239.9 616.7,235.0 620.9,241.4 630.3,246.1Z" fill="#0f0f0f"/>
<path d="M751.4,239.0 741.4,243.4 737.8,249.3 747.3,245.2Z" fill="#616161"/>
<path d="M620.4,168.3 614.0,169.1 614.0,179.1 620.4,178.3Z" fill="#919191"/>
<path d="M748.5,191.9 743.0,195.2 754.7,198.0 761.4,194.1Z" fill="#c4c4c4"/>
<path d="M626.2,192.0 620.3,188.3 607.5,189.8 614.6,194.2Z" fill="#c4c4c4"/>
<path d="M737.6,209.0 723.0,213.6 716.0,211.1 727.9,207.3Z" fill="#bbbbbb"/>
<path d="M645.4,211.3 630.8,205.8 640.5,204.7 652.5,209.2Z" fill="#c2c2c2"/>
<path d="M761.9,193.8 754.1,198.3 754.1,209.0 761.8,204.3Z" fill="#aaaaaa"/>
<path d="M614.4,194.1 606.7,189.1 606.6,199.6 614.4,204.8Z" fill="#1c1c1c"/>
<path d="M716.0,211.1 700.9,213.3 697.5,210.6 709.5,208.9Z" fill="#bababa"/>
<path d="M667.5,212.3 652.5,209.2 658.9,207.3 670.9,209.8Z" fill="#bfbfbf"/>
<path d="M614.0,169.1 607.6,169.8 607.6,179.8 614.0,179.1Z" fill="#919191"/>
<path d="M737.8,249.3 726.3,252.6 721.8,255.2 732.1,252.2Z" fill="#141414"/>
<path d="M641.8,250.1 630.3,246.1 636.0,249.3 646.3,252.9Z" fill="#070707"/>
<path d="M753.6,230.1 743.2,234.5 741.4,243.4 751.4,239.0Z" fill="#929292"/>
<path d="M625.1,230.9 614.7,226.0 616.7,235.0 626.8,239.9Z" fill="#232323"/>
<path d="M700.9,213.3 684.2,213.7 684.2,211.0 697.5,210.6Z" fill="#bababa"/>
<path d="M684.2,213.7 667.5,212.3 670.9,209.8 684.2,211.0Z" fill="#bcbcbc"/>
<path d="M754.0,219.7 743.6,223.9 743.2,234.5 753.6,230.1Z" fill="#acacac"/>
<path d="M624.8,220.3 614.3,215.5 614.7,226.0 625.1,230.9Z" fill="#383838"/>
<path d="M741.4,243.4 729.1,246.8 726.3,252.6 737.8,249.3Z" fill="#646464"/>
<path d="M639.1,244.1 626.8,239.9 630.3,246.1 641.8,250.1Z" fill="#202020"/>
<path d="M726.3,252.6 713.2,254.9 710.1,257.3 721.8,255.2Z" fill="#141414"/>
<path d="M655.0,253.2 641.8,250.1 646.3,252.9 658.0,255.7Z" fill="#070707"/>
<path d="M743.0,195.2 735.7,198.0 746.0,201.4 754.7,198.0Z" fill="#c4c4c4"/>
<path d="M754.1,209.0 743.6,213.0 743.6,223.9 754.0,219.7Z" fill="#b2b2b2"/>
<path d="M624.8,209.5 614.4,204.8 614.3,215.5 624.8,220.3Z" fill="#3e3e3e"/>
<path d="M723.0,213.6 704.6,216.3 700.9,213.3 716.0,211.1Z" fill="#bbbbbb"/>
<path d="M663.8,215.1 645.4,211.3 652.5,209.2 667.5,212.3Z" fill="#bfbfbf"/>
<path d="M633.9,195.3 626.2,192.0 614.6,194.2 623.8,198.2Z" fill="#c4c4c4"/>
<path d="M754.1,198.3 743.7,202.1 743.6,213.0 754.1,209.0Z" fill="#b2b2b2"/>
<path d="M624.9,198.5 614.4,194.1 614.4,204.8 624.8,209.5Z" fill="#3e3e3e"/>
<path d="M743.2,234.5 730.5,237.9 729.1,246.8 741.4,243.4Z" fill="#959595"/>
<path d="M637.7,235.1 625.1,230.9 626.8,239.9 639.1,244.1Z" fill="#424242"/>
<path d="M713.2,254.9 698.9,256.1 697.3,258.4 710.1,257.3Z" fill="#131313"/>
<path d="M669.2,255.3 655.0,253.2 658.0,255.7 670.8,257.6Z" fill="#0a0a0a"/>
<path d="M704.6,216.3 684.2,216.8 684.2,213.7 700.9,213.3Z" fill="#bbbbbb"/>
<path d="M684.2,216.8 663.8,215.1 667.5,212.3 684.2,213.7Z" fill="#bdbdbd"/>
<path d="M729.1,246.8 715.1,249.2 713.2,254.9 726.3,252.6Z" fill="#646464"/>
<path d="M653.1,247.3 639.1,244.1 641.8,250.1 655.0,253.2Z" fill="#353535"/>
<path d="M698.9,256.1 684.1,256.3 684.0,258.5 697.3,258.4Z" fill="#111111"/>
<path d="M684.1,256.3 669.2,255.3 670.8,257.6 684.0,258.5Z" fill="#0e0e0e"/>
<path d="M743.6,223.9 730.9,227.2 730.5,237.9 743.2,234.5Z" fill="#b0b0b0"/>
<path d="M637.5,224.4 624.8,220.3 625.1,230.9 637.7,235.1Z" fill="#595959"/>
<path d="M735.7,198.0 727.0,200.3 735.6,204.1 746.0,201.4Z" fill="#c4c4c4"/>
<path d="M743.6,213.0 730.9,216.2 730.9,227.2 743.6,223.9Z" fill="#b6b6b6"/>
<path d="M637.6,213.4 624.8,209.5 624.8,220.3 637.5,224.4Z" fill="#5e5e5e"/>
<path d="M715.1,249.2 699.9,250.5 698.9,256.1 713.2,254.9Z" fill="#616161"/>
<path d="M668.3,249.5 653.1,247.3 655.0,253.2 669.2,255.3Z" fill="#454545"/>
<path d="M730.5,237.9 716.1,240.3 715.1,249.2 729.1,246.8Z" fill="#959595"/>
<path d="M652.2,238.4 637.7,235.1 639.1,244.1 653.1,247.3Z" fill="#5c5c5c"/>
<path d="M743.7,202.1 730.9,205.1 730.9,216.2 743.6,213.0Z" fill="#b6b6b6"/>
<path d="M637.6,202.3 624.9,198.5 624.8,209.5 637.6,213.4Z" fill="#5e5e5e"/>
<path d="M699.9,250.5 684.1,250.6 684.1,256.3 698.9,256.1Z" fill="#5b5b5b"/>
<path d="M684.1,250.6 668.3,249.5 669.2,255.3 684.1,256.3Z" fill="#525252"/>
<path d="M634.2,192.4 623.9,189.2 623.8,198.2 634.1,201.4Z" fill="#595959"/>
<path d="M727.0,200.3 717.1,202.1 723.7,206.3 735.6,204.1Z" fill="#c4c4c4"/>
<path d="M642.6,178.0 634.0,175.3 623.9,178.2 634.2,181.4Z" fill="#c4c4c4"/>
<path d="M730.9,227.2 716.3,229.5 716.1,240.3 730.5,237.9Z" fill="#b0b0b0"/>
<path d="M652.0,227.6 637.5,224.4 637.7,235.1 652.2,238.4Z" fill="#757575"/>
<path d="M716.1,240.3 700.4,241.6 699.9,250.5 715.1,249.2Z" fill="#929292"/>
<path d="M667.8,240.6 652.2,238.4 653.1,247.3 668.3,249.5Z" fill="#717171"/>
<path d="M634.2,181.4 623.9,178.2 623.9,189.2 634.2,192.4Z" fill="#595959"/>
<path d="M730.9,216.2 716.4,218.4 716.3,229.5 730.9,227.2Z" fill="#b6b6b6"/>
<path d="M652.1,216.5 637.6,213.4 637.5,224.4 652.0,227.6Z" fill="#7a7a7a"/>
<path d="M700.4,241.6 684.1,241.7 684.1,250.6 699.9,250.5Z" fill="#8a8a8a"/>
<path d="M684.1,241.7 667.8,240.6 668.3,249.5 684.1,250.6Z" fill="#808080"/>
<path d="M716.3,229.5 700.6,230.7 700.4,241.6 716.1,240.3Z" fill="#acacac"/>
<path d="M667.8,229.7 652.0,227.6 652.2,238.4 667.8,240.6Z" fill="#8a8a8a"/>
<path d="M662.7,192.0 660.5,194.1 660.5,204.1 662.6,202.0Z" fill="#808080"/>
<path d="M652.2,180.2 642.6,178.0 634.2,181.4 645.8,184.1Z" fill="#c4c4c4"/>
<path d="M730.9,205.1 716.4,207.2 716.4,218.4 730.9,216.2Z" fill="#b6b6b6"/>
<path d="M652.1,205.3 637.6,202.3 637.6,213.4 652.1,216.5Z" fill="#7a7a7a"/>
<path d="M645.7,195.1 634.2,192.4 634.1,201.4 645.7,204.1Z" fill="#717171"/>
<path d="M700.6,230.7 684.2,230.8 684.1,241.7 700.4,241.6Z" fill="#a5a5a5"/>
<path d="M684.2,230.8 667.8,229.7 667.8,240.6 684.1,241.7Z" fill="#9a9a9a"/>
<path d="M675.7,203.3 662.6,202.0 658.3,206.2 674.0,207.8Z" fill="#c4c4c4"/>
<path d="M716.4,218.4 700.6,219.6 700.6,230.7 716.3,229.5Z" fill="#b2b2b2"/>
<path d="M667.8,218.6 652.1,216.5 652.0,227.6 667.8,229.7Z" fill="#909090"/>
<path d="M689.2,193.8 689.7,196.1 689.6,206.1 689.2,203.8Z" fill="#0c0c0c"/>
<path d="M662.7,182.0 660.6,184.1 660.5,194.1 662.7,192.0Z" fill="#808080"/>
<path d="M645.8,184.1 634.2,181.4 634.2,192.4 645.7,195.1Z" fill="#717171"/>
<path d="M689.2,203.8 675.7,203.3 674.0,207.8 690.1,208.4Z" fill="#c4c4c4"/>
<path d="M717.2,182.1 708.3,183.1 713.1,187.5 723.8,186.3Z" fill="#c4c4c4"/>
<path d="M662.7,182.0 652.2,180.2 645.8,184.1 658.4,186.2Z" fill="#c4c4c4"/>
<path d="M700.6,219.6 684.2,219.6 684.2,230.8 700.6,230.7Z" fill="#aaaaaa"/>
<path d="M684.2,219.6 667.8,218.6 667.8,229.7 684.2,230.8Z" fill="#9f9f9f"/>
<path d="M723.7,197.3 713.0,198.5 713.0,207.5 723.7,206.3Z" fill="#b5b5b5"/>
<path d="M660.5,194.1 658.4,196.2 658.3,206.2 660.5,204.1Z" fill="#808080"/>
<path d="M716.4,207.2 700.7,208.3 700.6,219.6 716.4,218.4Z" fill="#b2b2b2"/>
<path d="M667.9,207.3 652.1,205.3 652.1,216.5 667.8,218.6Z" fill="#909090"/>
<path d="M689.2,183.8 689.7,186.1 689.7,196.1 689.2,193.8Z" fill="#0c0c0c"/>
<path d="M658.4,197.2 645.7,195.1 645.7,204.1 658.3,206.2Z" fill="#858585"/>
<path d="M708.3,183.1 698.9,183.7 701.8,188.2 713.1,187.5Z" fill="#c4c4c4"/>
<path d="M700.7,208.3 684.3,208.3 684.2,219.6 700.6,219.6Z" fill="#aaaaaa"/>
<path d="M684.3,208.3 667.9,207.3 667.8,218.6 684.2,219.6Z" fill="#9f9f9f"/>
<path d="M723.8,186.3 713.1,187.5 713.0,198.5 723.7,197.3Z" fill="#b5b5b5"/>
<path d="M660.6,184.1 658.4,186.2 658.4,196.2 660.5,194.1Z" fill="#808080"/>
<path d="M689.7,196.1 690.2,198.4 690.1,208.4 689.6,206.1Z" fill="#0c0c0c"/>
<path d="M713.0,198.5 701.8,199.2 701.7,208.2 713.0,207.5Z" fill="#b1b1b1"/>
<path d="M658.4,186.2 645.8,184.1 645.7,195.1 658.4,197.2Z" fill="#858585"/>
<path d="M698.9,183.7 689.2,183.8 690.2,188.4 701.8,188.2Z" fill="#c4c4c4"/>
<path d="M701.8,199.2 690.2,199.4 690.1,208.4 701.7,208.2Z" fill="#acacac"/>
<path d="M689.7,186.1 690.2,188.4 690.2,198.4 689.7,196.1Z" fill="#0c0c0c"/>
<path d="M713.1,187.5 701.8,188.2 701.8,199.2 713.0,198.5Z" fill="#b1b1b1"/>
<path d="M701.8,188.2 690.2,188.4 690.2,199.4 701.8,199.2Z" fill="#acacac"/>
</g>
<g fill="none" stroke-width="1"><path d="M655.5,505 L660.5,450" stroke="#4a4a58"/><path d="M655.5,505 L665,466" stroke="#b8506a"/><path d="M655.5,505 L722,515.5" stroke="#b8506a"/></g>
<g font-family="Liberation Sans" font-size="6" fill="#333"><text x="659" y="449">z</text></g><g font-family="Liberation Sans" font-size="6.5" fill="#b0405a"><text x="663" y="468">y</text><text x="721" y="518">x</text></g>
</svg>
<div class="a" style="left:207.5px;top:85.5px;width:179.5px;height:364.5px;background:#3e3e3e;border:1px solid #2a3440;box-shadow:2px 3px 6px rgba(0,0,0,0.45);"></div>
<div class="a" style="left:210.0px;top:107.0px;width:174.5px;height:340.5px;border-right:1px solid #353535;"></div>
<div class="a" style="left:208.0px;top:86.0px;width:178.5px;height:363.5px;border-left:2px solid #4f6f8e;border-right:2px solid #4f6f8e;border-bottom:2px solid #4f6f8e;"></div>
<div class="a" style="left:208.5px;top:86.0px;width:177.3px;height:21.0px;background:#ffffff;"></div>
<div class="a" style="left:215.0px;top:91.0px;width:9.0px;height:10.0px;background:#5fc4c0;border-radius:1px;"></div>
<div class="a" style="left:216.8px;top:92.0px;font-size:9px;line-height:9px;color:#134;letter-spacing:0px;transform:scaleX(1);transform-origin:0 0;font-weight:bold">3</div>
<div class="a" style="left:228.6px;top:91.8px;font-size:9.2px;line-height:9.2px;color:#222222;letter-spacing:0px;transform:scaleX(0.83);transform-origin:0 0;">Quad Remesher 1.0</div>
<svg class="a" style="left:371px;top:91px" width="10" height="10" viewBox="0 0 10 10"><path d="M1.2 1.4 L8.2 8.6 M8.2 1.4 L1.2 8.6" stroke="#333" stroke-width="1"/></svg>
<div class="a" style="left:218.4px;top:118.9px;font-size:8.7px;line-height:8.7px;color:#e2e2e2;letter-spacing:0px;transform:scaleX(0.835);transform-origin:0 0;">Target Quad Count</div>
<div class="a" style="left:291.6px;top:119.0px;width:81.6px;height:10.0px;background:#575757;"></div>
<div class="a" style="left:293.1px;top:120.2px;font-size:8.7px;line-height:8.7px;color:#d4d4d4;letter-spacing:0px;transform:scaleX(0.835);transform-origin:0 0;">3000</div>
<svg class="a" style="left:366.7px;top:119.0px" width="6" height="10" viewBox="0 0 6 10"><path d="M1 4 L3 1.5 L5 4Z M1 6 L3 8.5 L5 6Z" fill="#e8e8e8"/></svg>
<div class="a" style="left:219.0px;top:137.5px;width:156.2px;height:3.0px;background:#f4f4f4;"></div>
<svg class="a" style="left:263.5px;top:133px" width="9" height="14" viewBox="0 0 9 14"><path d="M1 1.5 Q1 0.5 2 0.5 L7 0.5 Q8 0.5 8 1.5 L8 10 L4.5 13.5 L1 10Z" fill="#1a7ad0"/></svg>
<div class="a" style="left:218.5px;top:149.0px;width:157.0px;height:83.5px;border:1px solid #363636;box-shadow:inset 1px 1px 0 #454545;"></div>
<div class="a" style="left:221.8px;top:151.9px;font-size:8.7px;line-height:8.7px;color:#e2e2e2;letter-spacing:0px;transform:scaleX(0.835);transform-origin:0 0;">Quad size settings...</div>
<div class="a" style="left:224.7px;top:167.8px;font-size:8.7px;line-height:8.7px;color:#e2e2e2;letter-spacing:0px;transform:scaleX(0.835);transform-origin:0 0;">Adaptive Size</div>
<div class="a" style="left:275.2px;top:168.0px;width:52.3px;height:9.5px;background:#575757;"></div>
<div class="a" style="left:276.7px;top:168.4px;font-size:8.7px;line-height:8.7px;color:#d4d4d4;letter-spacing:0px;transform:scaleX(0.835);transform-origin:0 0;">50</div>
<svg class="a" style="left:321.0px;top:167.8px" width="6" height="10" viewBox="0 0 6 10"><path d="M1 4 L3 1.5 L5 4Z M1 6 L3 8.5 L5 6Z" fill="#e8e8e8"/></svg>
<div class="a" style="left:226.1px;top:187.0px;width:6.0px;height:6.0px;background:#5b5b5b;"></div>
<div class="a" style="left:233.9px;top:186.0px;font-size:8.7px;line-height:8.7px;color:#e2e2e2;letter-spacing:0px;transform:scaleX(0.835);transform-origin:0 0;">Adaptive Quad Count</div>
<div class="a" style="left:226.1px;top:202.5px;width:6.0px;height:6.0px;background:#5b5b5b;"></div>
<div class="a" style="left:234.0px;top:201.6px;font-size:8.7px;line-height:8.7px;color:#e2e2e2;letter-spacing:0px;transform:scaleX(0.835);transform-origin:0 0;">Use Vertex Colors for Quads Density</div>
<div class="a" style="left:224.7px;top:214.0px;font-size:8.7px;line-height:8.7px;color:#e2e2e2;letter-spacing:0px;transform:scaleX(0.835);transform-origin:0 0;">Painted Quad Density</div>
<div class="a" style="left:298.0px;top:214.8px;width:46.5px;height:9.2px;background:#575757;"></div>
<div class="a" style="left:299.5px;top:215.1px;font-size:8.7px;line-height:8.7px;color:#d4d4d4;letter-spacing:0px;transform:scaleX(0.835);transform-origin:0 0;">2.0</div>
<svg class="a" style="left:338.0px;top:214.4px" width="6" height="10" viewBox="0 0 6 10"><path d="M1 4 L3 1.5 L5 4Z M1 6 L3 8.5 L5 6Z" fill="#e8e8e8"/></svg>
<div class="a" style="left:353.5px;top:213.8px;width:17.5px;height:12.7px;background:#555555;border-radius:2px;"></div>
<div class="a" style="left:354.0px;top:215.8px;width:17.0px;text-align:center;font-size:8.7px;line-height:8.7px;color:#cfcfcf;letter-spacing:0px;transform:scaleX(0.835);transform-origin:50% 0">P</div>
<div class="a" style="left:218.5px;top:240.0px;width:157.0px;height:85.7px;border:1px solid #363636;box-shadow:inset 1px 1px 0 #454545;"></div>
<div class="a" style="left:221.8px;top:244.1px;font-size:8.7px;line-height:8.7px;color:#e2e2e2;letter-spacing:0px;transform:scaleX(0.835);transform-origin:0 0;">Edge Loops control...</div>
<div class="a" style="left:226.1px;top:263.5px;width:6.0px;height:6.0px;background:#5b5b5b;"></div>
<div class="a" style="left:234.0px;top:262.6px;font-size:8.7px;line-height:8.7px;color:#e2e2e2;letter-spacing:0px;transform:scaleX(0.835);transform-origin:0 0;">Use Smoothing Groups</div>
<div class="a" style="left:226.1px;top:279.0px;width:6.0px;height:6.0px;background:#5b5b5b;"></div>
<div class="a" style="left:234.0px;top:278.1px;font-size:8.7px;line-height:8.7px;color:#e2e2e2;letter-spacing:0px;transform:scaleX(0.835);transform-origin:0 0;">Use Normals Creasing</div>
<div class="a" style="left:226.1px;top:294.7px;width:6.0px;height:6.0px;background:#5b5b5b;"></div>
<div class="a" style="left:234.0px;top:293.8px;font-size:8.7px;line-height:8.7px;color:#e2e2e2;letter-spacing:0px;transform:scaleX(0.835);transform-origin:0 0;">Use MaterialIDs</div>
<div class="a" style="left:226.1px;top:310.5px;width:6.0px;height:6.0px;background:#5b5b5b;"></div>
<svg class="a" style="left:226.1px;top:310.5px" width="6" height="6" viewBox="0 0 6 6"><path d="M0.8 3.2 L2.4 4.8 L5.2 1" stroke="#e8e8e8" stroke-width="1.2" fill="none"/></svg>
<div class="a" style="left:234.0px;top:309.6px;font-size:8.7px;line-height:8.7px;color:#e2e2e2;letter-spacing:0px;transform:scaleX(0.835);transform-origin:0 0;">Detect Hard-Edges by angle</div>
<div class="a" style="left:218.5px;top:334.5px;width:157.0px;height:74.5px;border:1px solid #363636;box-shadow:inset 1px 1px 0 #454545;"></div>
<div class="a" style="left:221.7px;top:338.6px;font-size:8.7px;line-height:8.7px;color:#e2e2e2;letter-spacing:0px;transform:scaleX(0.835);transform-origin:0 0;">Misc...</div>
<div class="a" style="left:226.1px;top:357.6px;width:6.0px;height:6.0px;background:#5b5b5b;"></div>
<svg class="a" style="left:226.1px;top:357.6px" width="6" height="6" viewBox="0 0 6 6"><path d="M0.8 3.2 L2.4 4.8 L5.2 1" stroke="#e8e8e8" stroke-width="1.2" fill="none"/></svg>
<div class="a" style="left:233.7px;top:356.7px;font-size:8.7px;line-height:8.7px;color:#e2e2e2;letter-spacing:0px;transform:scaleX(0.835);transform-origin:0 0;">Sym X</div>
<div class="a" style="left:277.2px;top:357.6px;width:6.0px;height:6.0px;background:#5b5b5b;"></div>
<svg class="a" style="left:277.2px;top:357.6px" width="6" height="6" viewBox="0 0 6 6"><path d="M0.8 3.2 L2.4 4.8 L5.2 1" stroke="#e8e8e8" stroke-width="1.2" fill="none"/></svg>
<div class="a" style="left:284.8px;top:356.7px;font-size:8.7px;line-height:8.7px;color:#e2e2e2;letter-spacing:0px;transform:scaleX(0.835);transform-origin:0 0;">Sym Y</div>
<div class="a" style="left:328.4px;top:357.6px;width:6.0px;height:6.0px;background:#5b5b5b;"></div>
<div class="a" style="left:336.0px;top:356.7px;font-size:8.7px;line-height:8.7px;color:#e2e2e2;letter-spacing:0px;transform:scaleX(0.835);transform-origin:0 0;">Sym Z</div>
<div class="a" style="left:227.0px;top:372.1px;width:140.2px;height:12.7px;background:#5a5a5a;border-radius:1px;"></div>
<div class="a" style="left:227.0px;top:374.0px;width:140.2px;text-align:center;font-size:8.7px;line-height:8.7px;color:#e0e0e0;letter-spacing:0px;transform:scaleX(0.835);transform-origin:50% 0">Create MultiMaterial</div>
<div class="a" style="left:227.0px;top:389.1px;width:98.5px;height:12.7px;background:#5a5a5a;border-radius:1px;"></div>
<div class="a" style="left:227.0px;top:391.1px;width:98.5px;text-align:center;font-size:8.7px;line-height:8.7px;color:#e0e0e0;letter-spacing:0px;transform:scaleX(0.835);transform-origin:50% 0">License Manager</div>
<div class="a" style="left:330.6px;top:389.1px;width:36.6px;height:12.7px;background:#5a5a5a;border-radius:1px;"></div>
<div class="a" style="left:330.6px;top:391.1px;width:36.6px;text-align:center;font-size:8.7px;line-height:8.7px;color:#e0e0e0;letter-spacing:0px;transform:scaleX(0.835);transform-origin:50% 0">Web Doc</div>
<div class="a" style="left:219.0px;top:417.8px;width:155.6px;height:27.2px;background:#646464;border:1px solid #747474;border-radius:1px;"></div>
<div class="a" style="left:219.0px;top:427.6px;width:155.6px;text-align:center;font-size:8.7px;line-height:8.7px;color:#dcdcdc;letter-spacing:0px;transform:scaleX(0.835);transform-origin:50% 0">&lt;&lt;&nbsp;&nbsp;&nbsp;REMESH IT&nbsp;&nbsp;&nbsp;&gt;&gt;</div>
</body></html>
